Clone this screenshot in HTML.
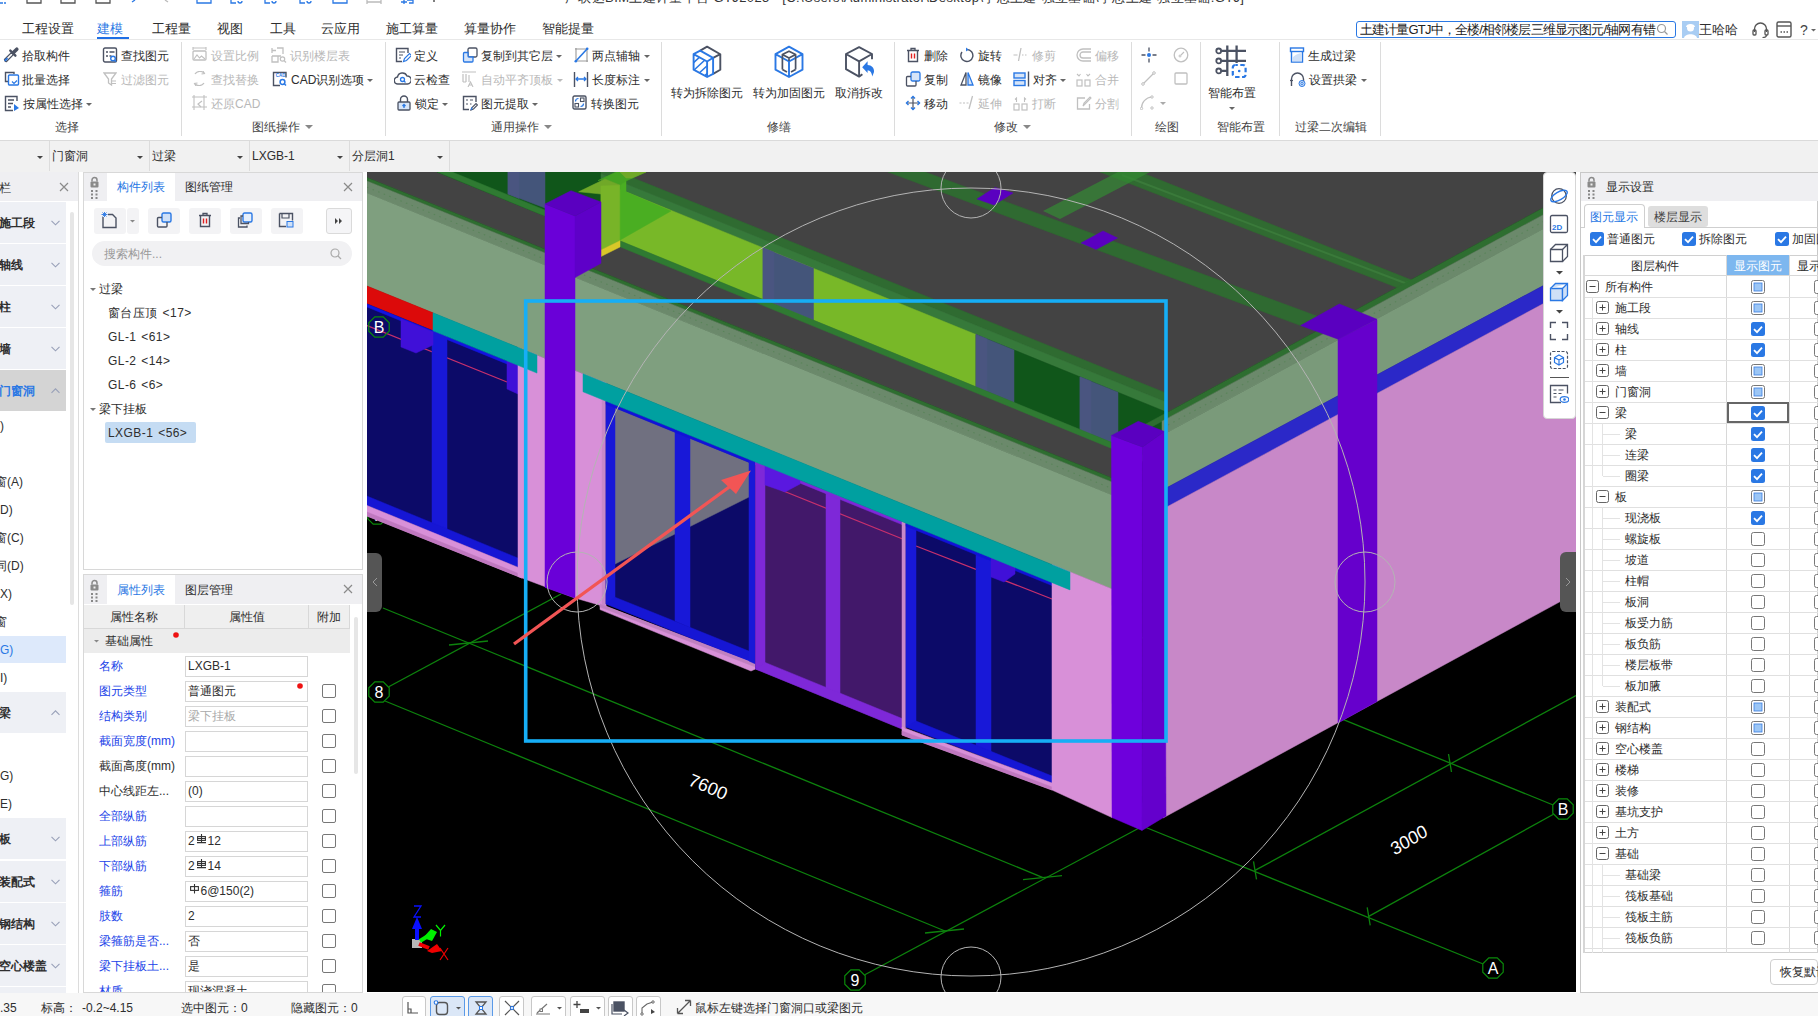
<!DOCTYPE html><html><head><meta charset="utf-8"><style>
html,body{margin:0;padding:0;width:1818px;height:1016px;overflow:hidden;background:#fff;font-family:"Liberation Sans",sans-serif;}
.t{position:absolute;white-space:nowrap;}
.r{position:absolute;}
</style></head><body>
<svg class="r" style="left:0;top:0" width="1818" height="10" viewBox="0 0 1818 10"><path d="M0 3h3M4 3h2" stroke="#2a78e4" stroke-width="1.5"/><path d="M27 0v3h14v-3" stroke="#555" fill="none" stroke-width="1.3"/><path d="M61 0v3h14v-3" stroke="#555" fill="none" stroke-width="1.3"/><path d="M96 0v3h14v-3" stroke="#555" fill="none" stroke-width="1.3"/><path d="M132 2l3 -2" stroke="#2a78e4" stroke-width="1.3"/><path d="M165 0l3 2" stroke="#bbb" stroke-width="1.3"/><path d="M197 0v3h14v-3" stroke="#2a78e4" fill="none" stroke-width="1.3"/><path d="M231 0v3h5M238 1a2 2 0 1 0 4 0" stroke="#2a78e4" fill="none" stroke-width="1.3"/><path d="M265 0v3h5M272 1a2 2 0 1 0 4 0" stroke="#2a78e4" fill="none" stroke-width="1.3"/><path d="M300 0v3h5M307 1a2 2 0 1 0 4 0" stroke="#2a78e4" fill="none" stroke-width="1.3"/><path d="M333 0v3h14v-3" stroke="#2a78e4" fill="none" stroke-width="1.3"/><path d="M367 0v4M381 0v4M367 2h14" stroke="#bbb" fill="none" stroke-width="1.3"/><path d="M401 2h6M404 0v4M407 0h6v3h-4" stroke="#2a78e4" fill="none" stroke-width="1.3"/><path d="M433 1h2" stroke="#555" stroke-width="1.3"/></svg>
<div class="t" style="left:565px;top:-10px;font-size:13px;line-height:16px;color:#333;white-space:nowrap;letter-spacing:0.37px">广联达BIM土建计量平台 GTJ2025 - [C:\Users\Administrator\Desktop\学思土建-独立基础\学思土建-独立基础.GTJ]</div>
<div class="t" style="left:22px;top:19.5px;font-size:13px;line-height:17px;color:#2e2e2e;font-weight:normal;">工程设置</div>
<div class="t" style="left:97px;top:19.5px;font-size:13px;line-height:17px;color:#2a78e4;font-weight:normal;">建模</div>
<div class="t" style="left:152px;top:19.5px;font-size:13px;line-height:17px;color:#2e2e2e;font-weight:normal;">工程量</div>
<div class="t" style="left:217px;top:19.5px;font-size:13px;line-height:17px;color:#2e2e2e;font-weight:normal;">视图</div>
<div class="t" style="left:270px;top:19.5px;font-size:13px;line-height:17px;color:#2e2e2e;font-weight:normal;">工具</div>
<div class="t" style="left:321px;top:19.5px;font-size:13px;line-height:17px;color:#2e2e2e;font-weight:normal;">云应用</div>
<div class="t" style="left:386px;top:19.5px;font-size:13px;line-height:17px;color:#2e2e2e;font-weight:normal;">施工算量</div>
<div class="t" style="left:464px;top:19.5px;font-size:13px;line-height:17px;color:#2e2e2e;font-weight:normal;">算量协作</div>
<div class="t" style="left:542px;top:19.5px;font-size:13px;line-height:17px;color:#2e2e2e;font-weight:normal;">智能提量</div>
<div class="r" style="left:97px;top:37px;width:32px;height:3px;background:#1f6fe5;border-radius:0px;"></div>
<div class="r" style="left:0px;top:39px;width:1818px;height:1px;background:#e8e8e8;border-radius:0px;"></div>
<div class="r" style="left:1356px;top:21px;width:320px;height:17px;background:#fff;border:1.5px solid #2a78e4;box-sizing:border-box;border-radius:3px;"></div>
<div class="t" style="left:1360px;top:21.0px;font-size:13px;line-height:17px;color:#222;font-weight:normal;white-space:nowrap;width:296px;overflow:hidden;letter-spacing:-0.85px">土建计量GTJ中，全楼/相邻楼层三维显示图元/轴网有错</div>
<svg class="r" style="left:1656px;top:23px;" width="13" height="13" viewBox="0 0 13 13"><circle cx="5.5" cy="5.5" r="4" fill="none" stroke="#999" stroke-width="1.2"/><path d="M8.5 8.5l3 3" stroke="#999" stroke-width="1.2"/></svg>
<svg class="r" style="left:1682px;top:21px;" width="17" height="17" viewBox="0 0 17 17"><rect width="17" height="17" fill="#a9cdf3"/><circle cx="8.5" cy="7" r="3.5" fill="#fff"/><path d="M2 17c1-5 12-5 13 0z" fill="#fff"/><path d="M4 6c0-4 9-4 9 0z" fill="#fff"/></svg>
<div class="t" style="left:1699px;top:21.0px;font-size:13px;line-height:17px;color:#2e2e2e;font-weight:normal;">王哈哈</div>
<svg class="r" style="left:1752px;top:21px;" width="17" height="17" viewBox="0 0 17 17"><path d="M2.5 11V8a6 6 0 0 1 12 0v3" fill="none" stroke="#555" stroke-width="1.4"/><rect x="1" y="9" width="3" height="5" rx="1" fill="none" stroke="#555" stroke-width="1.3"/><rect x="13" y="9" width="3" height="5" rx="1" fill="none" stroke="#555" stroke-width="1.3"/><path d="M14.5 14c0 2-2 2.5-4 2.5" stroke="#555" fill="none" stroke-width="1.2"/></svg>
<svg class="r" style="left:1776px;top:20px;" width="16" height="18" viewBox="0 0 16 18"><rect x="1" y="2" width="14" height="15" rx="1.5" fill="none" stroke="#555" stroke-width="1.4"/><path d="M1 6h14" stroke="#555" stroke-width="1.4"/><path d="M4.5 12h1.5M7.5 12h1.5M10.5 12h1.5" stroke="#555" stroke-width="1.4"/></svg>
<div class="t" style="left:1800px;top:20.5px;font-size:14px;line-height:18px;color:#444;font-weight:normal;">?</div>
<svg class="r" style="left:1810.5px;top:28.75px" width="5.0" height="3.5" viewBox="0 0 5.0 3.5"><path d="M0 0H5.0L2.5 2.5Z" fill="#666"/></svg>
<div class="r" style="left:181px;top:42px;width:1px;height:94px;background:#dcdcdc;border-radius:0px;"></div>
<div class="r" style="left:385px;top:42px;width:1px;height:94px;background:#dcdcdc;border-radius:0px;"></div>
<div class="r" style="left:661px;top:42px;width:1px;height:94px;background:#dcdcdc;border-radius:0px;"></div>
<div class="r" style="left:894px;top:42px;width:1px;height:94px;background:#dcdcdc;border-radius:0px;"></div>
<div class="r" style="left:1131px;top:42px;width:1px;height:94px;background:#dcdcdc;border-radius:0px;"></div>
<div class="r" style="left:1200px;top:42px;width:1px;height:94px;background:#dcdcdc;border-radius:0px;"></div>
<div class="r" style="left:1279px;top:42px;width:1px;height:94px;background:#dcdcdc;border-radius:0px;"></div>
<div class="r" style="left:1380px;top:42px;width:1px;height:94px;background:#dcdcdc;border-radius:0px;"></div>
<svg class="r" style="left:3px;top:46px;" width="17" height="17" viewBox="0 0 17 17"><path d="M2.2 15.3L1.5 13.5L8.6 6.4L10.6 8.4L3.5 15.5Z" fill="#fff" stroke="#4b5263" stroke-width="1.3" stroke-linejoin="round"/><path d="M1.8 14.8L4.5 12.1" stroke="#2a78e4" stroke-width="1.8"/><path d="M7.3 4.6L12.4 9.7" stroke="#4b5263" stroke-width="2.4" stroke-linecap="round"/><path d="M10.2 6.8L13.8 3.2" stroke="#4b5263" stroke-width="3.6" stroke-linecap="round"/></svg>
<div class="t" style="left:22px;top:47.5px;font-size:12px;line-height:16px;color:#2e2e2e;font-weight:normal;">拾取构件</div>
<svg class="r" style="left:4px;top:71px;" width="16" height="16" viewBox="0 0 16 16"><path d="M10 3V1.5H1.5v9H4" fill="none" stroke="#4b5263" stroke-width="1.4"/><rect x="4.5" y="4" width="10" height="10" rx="1" fill="none" stroke="#2a78e4" stroke-width="1.4"/><path d="M8 10.5l2 2 3-3" fill="none" stroke="#2a78e4" stroke-width="1.2"/></svg>
<div class="t" style="left:22px;top:71.5px;font-size:12px;line-height:16px;color:#2e2e2e;font-weight:normal;">批量选择</div>
<svg class="r" style="left:4px;top:95px;" width="16" height="17" viewBox="0 0 16 17"><path d="M13 6V1.5H1.5v14H9" fill="none" stroke="#4b5263" stroke-width="1.4"/><path d="M4 5h6M4 8.5h5M4 12h3" stroke="#4b5263" stroke-width="1.3"/><path d="M10 9v7l5-3z" fill="#2a78e4"/></svg>
<div class="t" style="left:23px;top:95.5px;font-size:12px;line-height:16px;color:#2e2e2e;font-weight:normal;">按属性选择</div>
<svg class="r" style="left:86px;top:103.0px" width="6" height="4" viewBox="0 0 6 4"><path d="M0 0H6L3 3Z" fill="#666"/></svg>
<svg class="r" style="left:102px;top:47px;" width="16" height="16" viewBox="0 0 16 16"><rect x="1.5" y="1" width="13" height="14" rx="1.5" fill="none" stroke="#4b5263" stroke-width="1.4"/><path d="M4 5h2M7.5 5h5M4 9h2M7.5 9h2" stroke="#4b5263" stroke-width="1.3"/><circle cx="11" cy="11.5" r="2.3" fill="#fff" stroke="#2a78e4" stroke-width="1.4"/><path d="M12.6 13.2l1.6 1.6" stroke="#2a78e4" stroke-width="1.4"/></svg>
<div class="t" style="left:121px;top:47.5px;font-size:12px;line-height:16px;color:#2e2e2e;font-weight:normal;">查找图元</div>
<svg class="r" style="left:103px;top:71px;" width="14" height="16" viewBox="0 0 14 16"><path d="M1 2h12l-4.5 6v6l-3-2V8z" fill="none" stroke="#c0c0c0" stroke-width="1.3"/><path d="M9 10h4M9 12.5h4" stroke="#c0c0c0" stroke-width="1.1"/></svg>
<div class="t" style="left:121px;top:71.5px;font-size:12px;line-height:16px;color:#b8b8b8;font-weight:normal;">过滤图元</div>
<div class="t" style="left:-33.0px;top:119.0px;width:200px;text-align:center;font-size:12px;line-height:16px;color:#444;font-weight:normal">选择</div>
<svg class="r" style="left:192px;top:47px;" width="15" height="15" viewBox="0 0 15 15"><path d="M1 1h13M1 0v3M14 0v3" stroke="#c0c0c0" stroke-width="1.1"/><rect x="1" y="4" width="13" height="9" rx="1" fill="none" stroke="#c0c0c0" stroke-width="1.3"/><path d="M2 12l3-4 2.5 3 2-2 3.5 3" fill="none" stroke="#c0c0c0" stroke-width="1.1"/></svg>
<div class="t" style="left:211px;top:47.5px;font-size:12px;line-height:16px;color:#b8b8b8;font-weight:normal;">设置比例</div>
<svg class="r" style="left:271px;top:47px;" width="16" height="17" viewBox="0 0 16 17"><path d="M1 1v5M1 3.5h4M6 1h6v6M1 9v6h6v-6H1M7 9h3" fill="none" stroke="#c0c0c0" stroke-width="1.3"/><circle cx="11.5" cy="12" r="2.2" fill="none" stroke="#c0c0c0" stroke-width="1.2"/><path d="M13 13.5l2 2" stroke="#c0c0c0" stroke-width="1.2"/></svg>
<div class="t" style="left:290px;top:47.5px;font-size:12px;line-height:16px;color:#b8b8b8;font-weight:normal;">识别楼层表</div>
<svg class="r" style="left:192px;top:71px;" width="15" height="15" viewBox="0 0 15 15"><path d="M3 3a6 6 0 0 1 9-1M12 12a6 6 0 0 1-9 1" fill="none" stroke="#c0c0c0" stroke-width="1.3"/><path d="M11 0l1.5 2.5-3 .5M4 15l-1.5-2.5 3-.5" fill="none" stroke="#c0c0c0" stroke-width="1.1"/></svg>
<div class="t" style="left:211px;top:71.5px;font-size:12px;line-height:16px;color:#b8b8b8;font-weight:normal;">查找替换</div>
<svg class="r" style="left:272px;top:71px;" width="16" height="16" viewBox="0 0 16 16"><path d="M5 1.5H1.5v13H8" fill="none" stroke="#4b5263" stroke-width="1.4"/><path d="M5 1.5h9v5" fill="none" stroke="#4b5263" stroke-width="1.4"/><text x="3.8" y="6.3" font-size="4.5" fill="#2a78e4" font-family="Liberation Sans" font-weight="bold">CAD</text><circle cx="10.5" cy="11" r="2.4" fill="none" stroke="#2a78e4" stroke-width="1.5"/><path d="M12 12.5l2 2" stroke="#2a78e4" stroke-width="1.5"/></svg>
<div class="t" style="left:291px;top:71.5px;font-size:12px;line-height:16px;color:#2e2e2e;font-weight:normal;">CAD识别选项</div>
<svg class="r" style="left:367px;top:79.0px" width="6" height="4" viewBox="0 0 6 4"><path d="M0 0H6L3 3Z" fill="#666"/></svg>
<svg class="r" style="left:192px;top:95px;" width="15" height="15" viewBox="0 0 15 15"><path d="M2 0v15M0 2h15M0 12h15M12 0v15" stroke="#c0c0c0" stroke-width="1.1"/><path d="M10 6l-4 3 3 3" fill="none" stroke="#c0c0c0" stroke-width="1.2"/></svg>
<div class="t" style="left:211px;top:95.5px;font-size:12px;line-height:16px;color:#b8b8b8;font-weight:normal;">还原CAD</div>
<div class="t" style="left:252px;top:119.0px;font-size:12px;line-height:16px;color:#444;font-weight:normal;">图纸操作</div>
<svg class="r" style="left:305px;top:125.0px" width="8" height="5" viewBox="0 0 8 5"><path d="M0 0H8L4 4Z" fill="#888"/></svg>
<svg class="r" style="left:395px;top:47px;" width="16" height="16" viewBox="0 0 16 16"><path d="M13 6V1.5H1.5v13H7" fill="none" stroke="#4b5263" stroke-width="1.4"/><path d="M4 5h6M4 8h4M4 11h2" stroke="#4b5263" stroke-width="1.2"/><path d="M8.5 14.5l1-3 5-5 2 2-5 5z" fill="none" stroke="#2a78e4" stroke-width="1.2"/></svg>
<div class="t" style="left:414px;top:47.5px;font-size:12px;line-height:16px;color:#2e2e2e;font-weight:normal;">定义</div>
<svg class="r" style="left:394px;top:71px;" width="17" height="15" viewBox="0 0 17 15"><path d="M4 13a3.5 3.5 0 0 1-.5-7A5 5 0 0 1 13 5a3.8 3.8 0 0 1 .5 8z" fill="none" stroke="#4b5263" stroke-width="1.4"/><circle cx="8.5" cy="8.5" r="2" fill="none" stroke="#2a78e4" stroke-width="1.3"/><path d="M10 10l1.5 1.5" stroke="#2a78e4" stroke-width="1.3"/></svg>
<div class="t" style="left:414px;top:71.5px;font-size:12px;line-height:16px;color:#2e2e2e;font-weight:normal;">云检查</div>
<svg class="r" style="left:397px;top:95px;" width="14" height="16" viewBox="0 0 14 16"><path d="M3.5 7V4.5a3.5 3.5 0 0 1 7 0V7" fill="none" stroke="#4b5263" stroke-width="1.4"/><rect x="1" y="7" width="12" height="8" rx="1" fill="#d6e4f8" stroke="#4b5263" stroke-width="1.3"/><path d="M7 9.5v3.5M5.5 11l1.5-1.5 1.5 1.5" fill="none" stroke="#2a78e4" stroke-width="1.3"/></svg>
<div class="t" style="left:415px;top:95.5px;font-size:12px;line-height:16px;color:#2e2e2e;font-weight:normal;">锁定</div>
<svg class="r" style="left:442px;top:103.0px" width="6" height="4" viewBox="0 0 6 4"><path d="M0 0H6L3 3Z" fill="#666"/></svg>
<svg class="r" style="left:462px;top:47px;" width="16" height="16" viewBox="0 0 16 16"><rect x="6" y="1" width="9" height="9" rx="1.5" fill="#fff" stroke="#4b5263" stroke-width="1.3"/><path d="M6 5.5H2.5a1 1 0 0 0-1 1V14a1 1 0 0 0 1 1H10a1 1 0 0 0 1-1V10H7a1 1 0 0 1-1-1z" fill="#d6e4f8" stroke="#2a78e4" stroke-width="1.3"/></svg>
<div class="t" style="left:481px;top:47.5px;font-size:12px;line-height:16px;color:#2e2e2e;font-weight:normal;">复制到其它层</div>
<svg class="r" style="left:556px;top:55.0px" width="6" height="4" viewBox="0 0 6 4"><path d="M0 0H6L3 3Z" fill="#666"/></svg>
<svg class="r" style="left:461px;top:71px;" width="15" height="16" viewBox="0 0 15 16"><path d="M1 1h14M2 3v8M5 3v8M2 11h3" fill="none" stroke="#c0c0c0" stroke-width="1.2"/><path d="M8 4v7M7 16l2.5-5 2.5 5M8 14h3" fill="none" stroke="#c0c0c0" stroke-width="1.1"/></svg>
<div class="t" style="left:481px;top:71.5px;font-size:12px;line-height:16px;color:#b8b8b8;font-weight:normal;">自动平齐顶板</div>
<svg class="r" style="left:557px;top:79.0px" width="6" height="4" viewBox="0 0 6 4"><path d="M0 0H6L3 3Z" fill="#bbb"/></svg>
<svg class="r" style="left:462px;top:95px;" width="16" height="16" viewBox="0 0 16 16"><path d="M14 7V1.5H1.5v13H7" fill="none" stroke="#4b5263" stroke-width="1.4"/><path d="M4 5h2M8 5h3M4 9h2M8 9h1.5" stroke="#4b5263" stroke-width="1.2"/><path d="M9 15l1-2.5 4-4 1.5 1.5-4 4z" fill="none" stroke="#4b5263" stroke-width="1.1"/><path d="M9 15l1-2.5" stroke="#2a78e4" stroke-width="1.3"/></svg>
<div class="t" style="left:481px;top:95.5px;font-size:12px;line-height:16px;color:#2e2e2e;font-weight:normal;">图元提取</div>
<svg class="r" style="left:532px;top:103.0px" width="6" height="4" viewBox="0 0 6 4"><path d="M0 0H6L3 3Z" fill="#666"/></svg>
<svg class="r" style="left:574px;top:47px;" width="15" height="16" viewBox="0 0 15 16"><path d="M1 2h12M2 14h12M2 1v14M13 1v14" fill="none" stroke="#999" stroke-width="1.1"/><path d="M1.5 14.5L13.5 1.5" stroke="#2a78e4" stroke-width="1.6"/><circle cx="1.8" cy="14.2" r="1.3" fill="#2a78e4"/><circle cx="13.2" cy="1.8" r="1.3" fill="#2a78e4"/></svg>
<div class="t" style="left:592px;top:47.5px;font-size:12px;line-height:16px;color:#2e2e2e;font-weight:normal;">两点辅轴</div>
<svg class="r" style="left:644px;top:55.0px" width="6" height="4" viewBox="0 0 6 4"><path d="M0 0H6L3 3Z" fill="#666"/></svg>
<svg class="r" style="left:573px;top:71px;" width="16" height="16" viewBox="0 0 16 16"><path d="M1.5 1v15M14.5 1v15" stroke="#4b5263" stroke-width="1.4"/><path d="M3 8h10M5 6l-2 2 2 2M11 6l2 2-2 2" fill="none" stroke="#2a78e4" stroke-width="1.3"/></svg>
<div class="t" style="left:592px;top:71.5px;font-size:12px;line-height:16px;color:#2e2e2e;font-weight:normal;">长度标注</div>
<svg class="r" style="left:644px;top:79.0px" width="6" height="4" viewBox="0 0 6 4"><path d="M0 0H6L3 3Z" fill="#666"/></svg>
<svg class="r" style="left:572px;top:95px;" width="15" height="15" viewBox="0 0 15 15"><rect x="1" y="1" width="13" height="13" rx="1.5" fill="none" stroke="#4b5263" stroke-width="1.4"/><rect x="8.5" y="3" width="3.5" height="3.5" fill="none" stroke="#4b5263" stroke-width="1.1"/><rect x="3" y="8.5" width="3.5" height="3.5" fill="none" stroke="#4b5263" stroke-width="1.1"/><path d="M3.5 6.5a3 3 0 0 1 3-3M11.5 8.5a3 3 0 0 1-3 3" fill="none" stroke="#2a78e4" stroke-width="1.2"/></svg>
<div class="t" style="left:591px;top:95.5px;font-size:12px;line-height:16px;color:#2e2e2e;font-weight:normal;">转换图元</div>
<div class="t" style="left:491px;top:119.0px;font-size:12px;line-height:16px;color:#444;font-weight:normal;">通用操作</div>
<svg class="r" style="left:544px;top:125.0px" width="8" height="5" viewBox="0 0 8 5"><path d="M0 0H8L4 4Z" fill="#888"/></svg>
<svg class="r" style="left:692px;top:45px;" width="30" height="33" viewBox="0 0 30 33"><defs><clipPath id="lf"><path d="M1.6 9.2L15.1 16.5V32L1.6 24.7z"/></clipPath></defs><path d="M8.2 5.6L15.1 1.6L28.3 9.2V24.7L21.1 28.9M21.1 12.8L28.3 9.2" fill="none" stroke="#4b5263" stroke-width="1.9" stroke-linejoin="round"/><path d="M1.6 9.2L8.2 5.6L21.1 12.8V28.9L15.1 32L1.6 24.7Z M1.6 9.2L15.1 16.5L21.1 12.8 M15.1 16.5V32" fill="none" stroke="#2a78e4" stroke-width="1.9" stroke-linejoin="round"/><g clip-path="url(#lf)"><path d="M-1 20L10 10M1 26L14 14M5 30L16 20M10 33L17 27" stroke="#2a78e4" stroke-width="1.6"/></g></svg>
<div class="t" style="left:607.0px;top:85.0px;width:200px;text-align:center;font-size:12px;line-height:16px;color:#2e2e2e;font-weight:normal">转为拆除图元</div>
<svg class="r" style="left:774px;top:45px;" width="30" height="33" viewBox="0 0 30 33"><path d="M15 1.6L28.5 9.2V24.7L15 32L1.5 24.7V9.2Z M1.5 9.2L15 16.5L28.5 9.2 M15 16.5V32" fill="none" stroke="#2a78e4" stroke-width="1.9" stroke-linejoin="round"/><path d="M8.4 24.4V9.5L15 6.2L21.6 9.5V24.4 M8.4 9.5L15 13L21.6 9.5 M15 13V16" fill="none" stroke="#4b5263" stroke-width="1.7" stroke-linejoin="round"/><path d="M8.4 24.4L13 27M21.6 24.4L17 27" stroke="#4b5263" stroke-width="1.7"/></svg>
<div class="t" style="left:689.0px;top:85.0px;width:200px;text-align:center;font-size:12px;line-height:16px;color:#2e2e2e;font-weight:normal">转为加固图元</div>
<svg class="r" style="left:845px;top:46px;" width="31" height="33" viewBox="0 0 31 33"><path d="M1 8L14.1 1.1L27 8L14.1 15.3Z M1 8V23.2L14.1 30.6L17.4 28.3 M14.1 15.3V30.6 M27 8V13.3" fill="none" stroke="#4b5263" stroke-width="1.9" stroke-linejoin="round"/><path d="M17.2 21.2L22.6 15.3V19C26.5 19 29.5 22 29 26L27.3 30.6C27 27 25 24.2 22.6 24.2V26.9Z" fill="#2a78e4"/></svg>
<div class="t" style="left:759.0px;top:85.0px;width:200px;text-align:center;font-size:12px;line-height:16px;color:#2e2e2e;font-weight:normal">取消拆改</div>
<div class="t" style="left:679.0px;top:119.0px;width:200px;text-align:center;font-size:12px;line-height:16px;color:#444;font-weight:normal">修缮</div>
<svg class="r" style="left:906px;top:47px;" width="14" height="16" viewBox="0 0 14 16"><path d="M1 3.5h12M5 3.5V1.5h4v2" fill="none" stroke="#4b5263" stroke-width="1.3"/><path d="M2.5 3.5v11h9v-11" fill="none" stroke="#4b5263" stroke-width="1.4"/><path d="M5.5 6.5v5M8.5 6.5v5" stroke="#e02020" stroke-width="1.4"/></svg>
<div class="t" style="left:924px;top:47.5px;font-size:12px;line-height:16px;color:#2e2e2e;font-weight:normal;">删除</div>
<svg class="r" style="left:905px;top:71px;" width="16" height="16" viewBox="0 0 16 16"><rect x="6" y="1" width="9" height="9" rx="1.5" fill="#d6e4f8" stroke="#2a78e4" stroke-width="1.3"/><path d="M6 5.5H2.5a1 1 0 0 0-1 1V14a1 1 0 0 0 1 1H10a1 1 0 0 0 1-1V10" fill="none" stroke="#4b5263" stroke-width="1.3"/></svg>
<div class="t" style="left:924px;top:71.5px;font-size:12px;line-height:16px;color:#2e2e2e;font-weight:normal;">复制</div>
<svg class="r" style="left:905px;top:95px;" width="16" height="16" viewBox="0 0 16 16"><path d="M8 1.5v13M1.5 8h13" stroke="#4b5263" stroke-width="1.2"/><path d="M6 3.5L8 1.5l2 2M6 12.5l2 2 2-2M3.5 6L1.5 8l2 2M12.5 6l2 2-2 2" fill="none" stroke="#2a78e4" stroke-width="1.4"/></svg>
<div class="t" style="left:924px;top:95.5px;font-size:12px;line-height:16px;color:#2e2e2e;font-weight:normal;">移动</div>
<svg class="r" style="left:959px;top:47px;" width="15" height="16" viewBox="0 0 15 16"><path d="M8 2.5A6 6 0 1 1 3 5" fill="none" stroke="#4b5263" stroke-width="1.4"/><path d="M7 0.5l2.5 2-2.5 2z" fill="#2a78e4"/></svg>
<div class="t" style="left:978px;top:47.5px;font-size:12px;line-height:16px;color:#2e2e2e;font-weight:normal;">旋转</div>
<svg class="r" style="left:960px;top:71px;" width="14" height="15" viewBox="0 0 14 15"><path d="M6 1.5L1 14h5z" fill="none" stroke="#4b5263" stroke-width="1.3"/><path d="M8 1.5L13 14H8z" fill="#d6e4f8" stroke="#2a78e4" stroke-width="1.3"/></svg>
<div class="t" style="left:978px;top:71.5px;font-size:12px;line-height:16px;color:#2e2e2e;font-weight:normal;">镜像</div>
<svg class="r" style="left:959px;top:95px;" width="15" height="15" viewBox="0 0 15 15"><path d="M0.5 8h2M4 8h2M7.5 8h2" stroke="#c0c0c0" stroke-width="1.2"/><path d="M13.5 1L10 14" stroke="#c0c0c0" stroke-width="1.3"/></svg>
<div class="t" style="left:978px;top:95.5px;font-size:12px;line-height:16px;color:#b8b8b8;font-weight:normal;">延伸</div>
<svg class="r" style="left:1013px;top:47px;" width="15" height="15" viewBox="0 0 15 15"><path d="M0.5 8h4M9 8h1.5M12 8h1.5" stroke="#c0c0c0" stroke-width="1.2"/><path d="M8 1L5.5 14" stroke="#c0c0c0" stroke-width="1.3"/></svg>
<div class="t" style="left:1032px;top:47.5px;font-size:12px;line-height:16px;color:#b8b8b8;font-weight:normal;">修剪</div>
<svg class="r" style="left:1013px;top:71px;" width="17" height="16" viewBox="0 0 17 16"><rect x="1" y="2" width="11" height="5" fill="#d6e4f8" stroke="#2a78e4" stroke-width="1.4"/><rect x="1" y="9.5" width="11" height="5" fill="#d6e4f8" stroke="#2a78e4" stroke-width="1.4"/><path d="M15.5 0.5v15" stroke="#4b5263" stroke-width="1.4"/></svg>
<div class="t" style="left:1033px;top:71.5px;font-size:12px;line-height:16px;color:#2e2e2e;font-weight:normal;">对齐</div>
<svg class="r" style="left:1060px;top:79.0px" width="6" height="4" viewBox="0 0 6 4"><path d="M0 0H6L3 3Z" fill="#666"/></svg>
<svg class="r" style="left:1013px;top:95px;" width="15" height="16" viewBox="0 0 15 16"><rect x="1" y="9" width="5" height="6" fill="none" stroke="#c0c0c0" stroke-width="1.2"/><rect x="9" y="9" width="5" height="6" fill="none" stroke="#c0c0c0" stroke-width="1.2"/><path d="M3.5 7V3l-1.5 1.5M11.5 7V3l1.5 1.5" fill="none" stroke="#c0c0c0" stroke-width="1.1"/></svg>
<div class="t" style="left:1032px;top:95.5px;font-size:12px;line-height:16px;color:#b8b8b8;font-weight:normal;">打断</div>
<svg class="r" style="left:1076px;top:47px;" width="15" height="15" viewBox="0 0 15 15"><path d="M15 2H7a6 6 0 0 0 0 12h8M15 5H7a3 3 0 0 0 0 6h8" fill="none" stroke="#c0c0c0" stroke-width="1.3"/></svg>
<div class="t" style="left:1095px;top:47.5px;font-size:12px;line-height:16px;color:#b8b8b8;font-weight:normal;">偏移</div>
<svg class="r" style="left:1076px;top:71px;" width="15" height="16" viewBox="0 0 15 16"><rect x="1" y="9" width="5" height="6" fill="none" stroke="#c0c0c0" stroke-width="1.2"/><rect x="9" y="9" width="5" height="6" fill="none" stroke="#c0c0c0" stroke-width="1.2"/><path d="M1 3l2 2 1.5-2M14 3l-2 2-1.5-2" fill="none" stroke="#c0c0c0" stroke-width="1.1"/></svg>
<div class="t" style="left:1095px;top:71.5px;font-size:12px;line-height:16px;color:#b8b8b8;font-weight:normal;">合并</div>
<svg class="r" style="left:1076px;top:95px;" width="16" height="15" viewBox="0 0 16 15"><path d="M9 3H1.5v11h12V9" fill="none" stroke="#c0c0c0" stroke-width="1.3"/><path d="M7 11l1-3 6-6 1 1-6 6z" fill="none" stroke="#c0c0c0" stroke-width="1.1"/></svg>
<div class="t" style="left:1095px;top:95.5px;font-size:12px;line-height:16px;color:#b8b8b8;font-weight:normal;">分割</div>
<div class="t" style="left:994px;top:119.0px;font-size:12px;line-height:16px;color:#444;font-weight:normal;">修改</div>
<svg class="r" style="left:1023px;top:125.0px" width="8" height="5" viewBox="0 0 8 5"><path d="M0 0H8L4 4Z" fill="#888"/></svg>
<svg class="r" style="left:1141px;top:47px;" width="16" height="16" viewBox="0 0 16 16"><path d="M8 0.5v4M8 11.5v4M0.5 8h4M11.5 8h4" stroke="#4b5263" stroke-width="1.3"/><circle cx="8" cy="8" r="2" fill="#2a78e4"/></svg>
<svg class="r" style="left:1173px;top:47px;" width="16" height="16" viewBox="0 0 16 16"><circle cx="8" cy="8" r="6.8" fill="none" stroke="#c0c0c0" stroke-width="1.3"/><circle cx="7" cy="9" r="1" fill="none" stroke="#c0c0c0"/><path d="M8 8l3-3" stroke="#c0c0c0" stroke-width="1.1"/></svg>
<svg class="r" style="left:1141px;top:71px;" width="15" height="15" viewBox="0 0 15 15"><path d="M2 13L13 2" stroke="#c0c0c0" stroke-width="1.2"/><circle cx="2" cy="13" r="1.3" fill="#fff" stroke="#c0c0c0"/><circle cx="13" cy="2" r="1.3" fill="#fff" stroke="#c0c0c0"/></svg>
<svg class="r" style="left:1174px;top:72px;" width="14" height="13" viewBox="0 0 14 13"><rect x="1" y="1" width="12" height="11" rx="1" fill="none" stroke="#c0c0c0" stroke-width="1.3"/></svg>
<svg class="r" style="left:1140px;top:95px;" width="14" height="15" viewBox="0 0 14 15"><path d="M1.5 13.5A11 11 0 0 1 12 2" fill="none" stroke="#c0c0c0" stroke-width="1.2"/><circle cx="1.5" cy="13.5" r="1.2" fill="#fff" stroke="#c0c0c0"/><circle cx="12" cy="2" r="1.2" fill="#fff" stroke="#c0c0c0"/><circle cx="12" cy="13" r="1.2" fill="#fff" stroke="#c0c0c0"/></svg>
<svg class="r" style="left:1160px;top:102.0px" width="6" height="4" viewBox="0 0 6 4"><path d="M0 0H6L3 3Z" fill="#aaa"/></svg>
<div class="t" style="left:1067.0px;top:119.0px;width:200px;text-align:center;font-size:12px;line-height:16px;color:#444;font-weight:normal">绘图</div>
<svg class="r" style="left:1215px;top:45px;" width="33" height="34" viewBox="0 0 33 34"><path d="M6 5.9H31M6 15.9H31M6 25.9H13M12.3 0.5V31M21.6 0.5V18" stroke="#4b5263" stroke-width="2.3" fill="none"/><circle cx="3.7" cy="5.9" r="2.4" fill="#fff" stroke="#4b5263" stroke-width="1.8"/><circle cx="3.7" cy="15.9" r="2.4" fill="#fff" stroke="#4b5263" stroke-width="1.8"/><circle cx="3.7" cy="25.9" r="2.4" fill="#fff" stroke="#4b5263" stroke-width="1.8"/><rect x="17.8" y="20" width="12.8" height="12" rx="2.5" fill="#fff" stroke="#2a78e4" stroke-width="2.2" stroke-dasharray="4.5 2.5" stroke-dashoffset="2"/><circle cx="24.2" cy="26" r="1.3" fill="#2a78e4"/></svg>
<div class="t" style="left:1132.0px;top:85.0px;width:200px;text-align:center;font-size:12px;line-height:16px;color:#2e2e2e;font-weight:normal">智能布置</div>
<svg class="r" style="left:1229px;top:106.5px" width="6" height="4" viewBox="0 0 6 4"><path d="M0 0H6L3 3Z" fill="#666"/></svg>
<div class="t" style="left:1141.0px;top:119.0px;width:200px;text-align:center;font-size:12px;line-height:16px;color:#444;font-weight:normal">智能布置</div>
<svg class="r" style="left:1289px;top:47px;" width="16" height="16" viewBox="0 0 16 16"><rect x="1.5" y="1" width="13" height="3.5" fill="none" stroke="#2a78e4" stroke-width="1.4"/><path d="M2.5 4.5V15h11V4.5" fill="none" stroke="#2a78e4" stroke-width="1.4"/><path d="M3 14.5V11c3-3 6-4.5 10-5v8.5z" fill="#cfe0f7"/></svg>
<div class="t" style="left:1308px;top:47.5px;font-size:12px;line-height:16px;color:#2e2e2e;font-weight:normal;">生成过梁</div>
<svg class="r" style="left:1290px;top:71px;" width="16" height="16" viewBox="0 0 16 16"><path d="M1.5 15V8a6 6 0 0 1 12 0v2" fill="none" stroke="#4b5263" stroke-width="1.4"/><path d="M0 9.5h3" stroke="#4b5263" stroke-width="1.2"/><circle cx="12" cy="12.5" r="3" fill="#cfe0f7" stroke="#2a78e4" stroke-width="1"/><circle cx="12" cy="12.5" r="1.2" fill="none" stroke="#2a78e4" stroke-width=".8"/></svg>
<div class="t" style="left:1309px;top:71.5px;font-size:12px;line-height:16px;color:#2e2e2e;font-weight:normal;">设置拱梁</div>
<svg class="r" style="left:1361px;top:79.0px" width="6" height="4" viewBox="0 0 6 4"><path d="M0 0H6L3 3Z" fill="#666"/></svg>
<div class="t" style="left:1231.0px;top:119.0px;width:200px;text-align:center;font-size:12px;line-height:16px;color:#444;font-weight:normal">过梁二次编辑</div>
<div class="r" style="left:0px;top:140px;width:1818px;height:32px;background:#f1f1f1;border-radius:0px;"></div>
<div class="r" style="left:0px;top:140px;width:1818px;height:1px;background:#dadada;border-radius:0px;"></div>
<div class="r" style="left:49px;top:141px;width:1px;height:30px;background:#dcdcdc;border-radius:0px;"></div>
<div class="r" style="left:149px;top:141px;width:1px;height:30px;background:#dcdcdc;border-radius:0px;"></div>
<div class="r" style="left:249px;top:141px;width:1px;height:30px;background:#dcdcdc;border-radius:0px;"></div>
<div class="r" style="left:349px;top:141px;width:1px;height:30px;background:#dcdcdc;border-radius:0px;"></div>
<div class="r" style="left:449px;top:141px;width:1px;height:30px;background:#dcdcdc;border-radius:0px;"></div>
<svg class="r" style="left:37px;top:155.5px" width="6" height="4" viewBox="0 0 6 4"><path d="M0 0H6L3 3Z" fill="#444"/></svg>
<svg class="r" style="left:137px;top:155.5px" width="6" height="4" viewBox="0 0 6 4"><path d="M0 0H6L3 3Z" fill="#444"/></svg>
<svg class="r" style="left:237px;top:155.5px" width="6" height="4" viewBox="0 0 6 4"><path d="M0 0H6L3 3Z" fill="#444"/></svg>
<svg class="r" style="left:337px;top:155.5px" width="6" height="4" viewBox="0 0 6 4"><path d="M0 0H6L3 3Z" fill="#444"/></svg>
<svg class="r" style="left:437px;top:155.5px" width="6" height="4" viewBox="0 0 6 4"><path d="M0 0H6L3 3Z" fill="#444"/></svg>
<div class="t" style="left:52px;top:148.0px;font-size:12px;line-height:16px;color:#2e2e2e;font-weight:normal;">门窗洞</div>
<div class="t" style="left:152px;top:148.0px;font-size:12px;line-height:16px;color:#2e2e2e;font-weight:normal;">过梁</div>
<div class="t" style="left:252px;top:148.0px;font-size:12px;line-height:16px;color:#2e2e2e;font-weight:normal;">LXGB-1</div>
<div class="t" style="left:352px;top:148.0px;font-size:12px;line-height:16px;color:#2e2e2e;font-weight:normal;">分层洞1</div>
<div class="r" style="left:0px;top:172px;width:79px;height:821px;background:#fff;border-radius:0px;"></div>
<div class="r" style="left:78px;top:172px;width:1px;height:821px;background:#dcdcdc;border-radius:0px;"></div>
<div class="r" style="left:0px;top:172px;width:78px;height:29px;background:#efeff2;border-radius:0px;"></div>
<div class="t" style="left:-1px;top:179.5px;font-size:12px;line-height:16px;color:#2e2e2e;font-weight:normal;">栏</div>
<svg class="r" style="left:59px;top:182px;" width="10" height="10" viewBox="0 0 10 10"><path d="M1 1l8 8M9 1L1 9" stroke="#8a8a8a" stroke-width="1.2"/></svg>
<div class="r" style="left:0px;top:202px;width:66px;height:41px;background:#eef0f5;border-radius:0px;"></div>
<div class="t" style="left:-1px;top:215.0px;font-size:12px;line-height:16px;color:#2e2e2e;font-weight:bold;">施工段</div>
<svg class="r" style="left:51px;top:220px;" width="9" height="6" viewBox="0 0 9 6"><path d="M0 0l4 4 4-4" fill="none" stroke="#98a0b8" stroke-width="1.1" transform="translate(0.5,0.8)"/></svg>
<div class="r" style="left:0px;top:244px;width:66px;height:41px;background:#eef0f5;border-radius:0px;"></div>
<div class="t" style="left:-1px;top:257.0px;font-size:12px;line-height:16px;color:#2e2e2e;font-weight:bold;">轴线</div>
<svg class="r" style="left:51px;top:262px;" width="9" height="6" viewBox="0 0 9 6"><path d="M0 0l4 4 4-4" fill="none" stroke="#98a0b8" stroke-width="1.1" transform="translate(0.5,0.8)"/></svg>
<div class="r" style="left:0px;top:286px;width:66px;height:41px;background:#eef0f5;border-radius:0px;"></div>
<div class="t" style="left:-1px;top:299.0px;font-size:12px;line-height:16px;color:#2e2e2e;font-weight:bold;">柱</div>
<svg class="r" style="left:51px;top:304px;" width="9" height="6" viewBox="0 0 9 6"><path d="M0 0l4 4 4-4" fill="none" stroke="#98a0b8" stroke-width="1.1" transform="translate(0.5,0.8)"/></svg>
<div class="r" style="left:0px;top:328px;width:66px;height:41px;background:#eef0f5;border-radius:0px;"></div>
<div class="t" style="left:-1px;top:341.0px;font-size:12px;line-height:16px;color:#2e2e2e;font-weight:bold;">墙</div>
<svg class="r" style="left:51px;top:346px;" width="9" height="6" viewBox="0 0 9 6"><path d="M0 0l4 4 4-4" fill="none" stroke="#98a0b8" stroke-width="1.1" transform="translate(0.5,0.8)"/></svg>
<div class="r" style="left:0px;top:370px;width:66px;height:41px;background:#d4d4d4;border-radius:0px;"></div>
<div class="t" style="left:-1px;top:383.0px;font-size:12px;line-height:16px;color:#2a78e4;font-weight:bold;">门窗洞</div>
<svg class="r" style="left:51px;top:388px;" width="9" height="6" viewBox="0 0 9 6"><path d="M0 4l4-4 4 4" fill="none" stroke="#98a0b8" stroke-width="1.1" transform="translate(0.5,0.8)"/></svg>
<div class="r" style="left:0px;top:636px;width:66px;height:27px;background:#dde9fb;border-radius:0px;"></div>
<div class="t" style="left:0px;top:418.0px;font-size:12px;line-height:16px;color:#2e2e2e;font-weight:normal;">)</div>
<div class="t" style="left:-5px;top:474.0px;font-size:12px;line-height:16px;color:#2e2e2e;font-weight:normal;">窗(A)</div>
<div class="t" style="left:0px;top:502.0px;font-size:12px;line-height:16px;color:#2e2e2e;font-weight:normal;">D)</div>
<div class="t" style="left:-5px;top:530.0px;font-size:12px;line-height:16px;color:#2e2e2e;font-weight:normal;">窗(C)</div>
<div class="t" style="left:-5px;top:558.0px;font-size:12px;line-height:16px;color:#2e2e2e;font-weight:normal;">同(D)</div>
<div class="t" style="left:0px;top:586.0px;font-size:12px;line-height:16px;color:#2e2e2e;font-weight:normal;">X)</div>
<div class="t" style="left:-5px;top:614.0px;font-size:12px;line-height:16px;color:#2e2e2e;font-weight:normal;">窗</div>
<div class="t" style="left:0px;top:642.0px;font-size:12px;line-height:16px;color:#2a78e4;font-weight:normal;">G)</div>
<div class="t" style="left:0px;top:670.0px;font-size:12px;line-height:16px;color:#2e2e2e;font-weight:normal;">I)</div>
<div class="r" style="left:0px;top:692px;width:66px;height:41px;background:#eef0f5;border-radius:0px;"></div>
<div class="t" style="left:-1px;top:705.0px;font-size:12px;line-height:16px;color:#2e2e2e;font-weight:bold;">梁</div>
<svg class="r" style="left:51px;top:710px;" width="9" height="6" viewBox="0 0 9 6"><path d="M0 4l4-4 4 4" fill="none" stroke="#98a0b8" stroke-width="1.1" transform="translate(0.5,0.8)"/></svg>
<div class="t" style="left:0px;top:768.0px;font-size:12px;line-height:16px;color:#2e2e2e;font-weight:normal;">G)</div>
<div class="t" style="left:0px;top:796.0px;font-size:12px;line-height:16px;color:#2e2e2e;font-weight:normal;">E)</div>
<div class="r" style="left:0px;top:818px;width:66px;height:41px;background:#eef0f5;border-radius:0px;"></div>
<div class="t" style="left:-1px;top:831.0px;font-size:12px;line-height:16px;color:#2e2e2e;font-weight:bold;">板</div>
<svg class="r" style="left:51px;top:836px;" width="9" height="6" viewBox="0 0 9 6"><path d="M0 0l4 4 4-4" fill="none" stroke="#98a0b8" stroke-width="1.1" transform="translate(0.5,0.8)"/></svg>
<div class="r" style="left:0px;top:861px;width:66px;height:41px;background:#eef0f5;border-radius:0px;"></div>
<div class="t" style="left:-1px;top:874.0px;font-size:12px;line-height:16px;color:#2e2e2e;font-weight:bold;">装配式</div>
<svg class="r" style="left:51px;top:879px;" width="9" height="6" viewBox="0 0 9 6"><path d="M0 0l4 4 4-4" fill="none" stroke="#98a0b8" stroke-width="1.1" transform="translate(0.5,0.8)"/></svg>
<div class="r" style="left:0px;top:903px;width:66px;height:41px;background:#eef0f5;border-radius:0px;"></div>
<div class="t" style="left:-1px;top:916.0px;font-size:12px;line-height:16px;color:#2e2e2e;font-weight:bold;">钢结构</div>
<svg class="r" style="left:51px;top:921px;" width="9" height="6" viewBox="0 0 9 6"><path d="M0 0l4 4 4-4" fill="none" stroke="#98a0b8" stroke-width="1.1" transform="translate(0.5,0.8)"/></svg>
<div class="r" style="left:0px;top:945px;width:66px;height:41px;background:#eef0f5;border-radius:0px;"></div>
<div class="t" style="left:-1px;top:958.0px;font-size:12px;line-height:16px;color:#2e2e2e;font-weight:bold;">空心楼盖</div>
<svg class="r" style="left:51px;top:963px;" width="9" height="6" viewBox="0 0 9 6"><path d="M0 0l4 4 4-4" fill="none" stroke="#98a0b8" stroke-width="1.1" transform="translate(0.5,0.8)"/></svg>
<div class="r" style="left:0px;top:987px;width:66px;height:41px;background:#eef0f5;border-radius:0px;"></div>
<div class="r" style="left:70px;top:212px;width:4px;height:393px;background:#e6e6e6;border-radius:2px;"></div>
<div class="r" style="left:83px;top:172px;width:280px;height:398px;background:#fff;border:1px solid #d8d8d8;box-sizing:border-box;border-radius:0px;"></div>
<div class="r" style="left:84px;top:173px;width:278px;height:28px;background:#efeff2;border-radius:0px;"></div>
<div class="r" style="left:107px;top:173px;width:68px;height:28px;background:#fff;border-radius:0px;"></div>
<svg class="r" style="left:90px;top:176px;" width="9" height="23" viewBox="0 0 9 23"><path d="M2 5.5V4a2.5 2.5 0 0 1 5 0v1.5" fill="none" stroke="#8a8a8a" stroke-width="1.5"/><rect x="0.5" y="5.5" width="8" height="6" rx="1" fill="#8a8a8a"/><rect x="3.5" y="7.5" width="2" height="2" fill="#eee"/><rect x="1" y="14" width="2" height="2" fill="#888"/><rect x="5.5" y="14" width="2" height="2" fill="#888"/><rect x="1" y="17.5" width="2" height="2" fill="#888"/><rect x="5.5" y="17.5" width="2" height="2" fill="#888"/><rect x="1" y="21" width="2" height="2" fill="#888"/><rect x="5.5" y="21" width="2" height="2" fill="#888"/></svg>
<div class="t" style="left:117px;top:179.0px;font-size:12px;line-height:16px;color:#2a78e4;font-weight:normal;">构件列表</div>
<div class="t" style="left:185px;top:179.0px;font-size:12px;line-height:16px;color:#2e2e2e;font-weight:normal;">图纸管理</div>
<svg class="r" style="left:343px;top:182px;" width="10" height="10" viewBox="0 0 10 10"><path d="M1 1l8 8M9 1L1 9" stroke="#8a8a8a" stroke-width="1.2"/></svg>
<div class="r" style="left:94px;top:208px;width:32px;height:26px;background:#f3f3f5;border-radius:3px;"></div>
<div class="r" style="left:127px;top:208px;width:12px;height:26px;background:#f3f3f5;border-radius:3px;"></div>
<div class="r" style="left:148px;top:208px;width:32px;height:26px;background:#f3f3f5;border-radius:3px;"></div>
<div class="r" style="left:189px;top:208px;width:32px;height:26px;background:#f3f3f5;border-radius:3px;"></div>
<div class="r" style="left:230px;top:208px;width:32px;height:26px;background:#f3f3f5;border-radius:3px;"></div>
<div class="r" style="left:271px;top:208px;width:32px;height:26px;background:#f3f3f5;border-radius:3px;"></div>
<div class="r" style="left:326px;top:208px;width:26px;height:26px;background:#f5f5f7;border:1px solid #dadada;box-sizing:border-box;border-radius:3px;"></div>
<svg class="r" style="left:101px;top:212px;" width="17" height="17" viewBox="0 0 17 17"><path d="M2 5v10.5h13V6l-3.5-3.5H7" fill="none" stroke="#4b5263" stroke-width="1.4"/><path d="M1.5 0.5l4 4M5.5 0.5l-4 4M3.5 0v5M0.5 2.5h6" stroke="#2a78e4" stroke-width="0.9"/></svg>
<svg class="r" style="left:129.5px;top:219.75px" width="5.0" height="3.5" viewBox="0 0 5.0 3.5"><path d="M0 0H5.0L2.5 2.5Z" fill="#888"/></svg>
<svg class="r" style="left:156px;top:212px;" width="16" height="16" viewBox="0 0 16 16"><rect x="6" y="1" width="9" height="9" rx="1.5" fill="#cfe0f7" stroke="#2a78e4" stroke-width="1.4"/><path d="M6 5.5H2.5a1 1 0 0 0-1 1V14a1 1 0 0 0 1 1H10a1 1 0 0 0 1-1V10" fill="none" stroke="#4b5263" stroke-width="1.4"/></svg>
<svg class="r" style="left:198px;top:212px;" width="14" height="16" viewBox="0 0 14 16"><path d="M1 3.5h12M5 3.5V1.5h4v2" fill="none" stroke="#4b5263" stroke-width="1.3"/><path d="M2.5 3.5v11h9v-11" fill="none" stroke="#4b5263" stroke-width="1.4"/><path d="M5.5 6.5v5M8.5 6.5v5" stroke="#e02020" stroke-width="1.4"/></svg>
<svg class="r" style="left:237px;top:212px;" width="16" height="16" viewBox="0 0 16 16"><rect x="6" y="1" width="9" height="9" rx="1.5" fill="#e6effb" stroke="#2a78e4" stroke-width="1.4"/><path d="M6 4H4v7.5h7.5V10M3 6H1.5v9H10v-1.5" fill="none" stroke="#4b5263" stroke-width="1.3"/></svg>
<svg class="r" style="left:278px;top:212px;" width="16" height="16" viewBox="0 0 16 16"><path d="M1.5 1.5h13v7M1.5 1.5v13H8" fill="none" stroke="#4b5263" stroke-width="1.4"/><path d="M4 2v4h7V2" fill="none" stroke="#4b5263" stroke-width="1.2"/><rect x="9" y="9.5" width="6" height="5.5" fill="#cfe0f7" stroke="#2a78e4" stroke-width="1"/></svg>
<svg class="r" style="left:335px;top:218px;" width="8" height="6" viewBox="0 0 8 6"><path d="M0 0l3 3-3 3zM4 0l3 3-3 3z" fill="#444"/></svg>
<div class="r" style="left:92px;top:241px;width:260px;height:25px;background:#f1f1f3;border-radius:12.5px;"></div>
<div class="t" style="left:104px;top:246.0px;font-size:12px;line-height:16px;color:#999;font-weight:normal;">搜索构件...</div>
<svg class="r" style="left:330px;top:248px;" width="12" height="12" viewBox="0 0 12 12"><circle cx="5" cy="5" r="4" fill="none" stroke="#aaa" stroke-width="1.2"/><path d="M8 8l3 3" stroke="#aaa" stroke-width="1.2"/></svg>
<svg class="r" style="left:89.5px;top:287.5px" width="6" height="4" viewBox="0 0 6 4"><path d="M0 0H6L3 3Z" fill="#777"/></svg>
<div class="t" style="left:99px;top:280.5px;font-size:12px;line-height:16px;color:#2e2e2e;font-weight:normal;">过梁</div>
<div class="t" style="left:108px;top:304.5px;font-size:12px;line-height:16px;color:#2e2e2e;font-weight:normal;word-spacing:1px;letter-spacing:0.45px">窗台压顶 &lt;17&gt;</div>
<div class="t" style="left:108px;top:328.5px;font-size:12px;line-height:16px;color:#2e2e2e;font-weight:normal;word-spacing:1px;letter-spacing:0.45px">GL-1 &lt;61&gt;</div>
<div class="t" style="left:108px;top:352.5px;font-size:12px;line-height:16px;color:#2e2e2e;font-weight:normal;word-spacing:1px;letter-spacing:0.45px">GL-2 &lt;14&gt;</div>
<div class="t" style="left:108px;top:376.5px;font-size:12px;line-height:16px;color:#2e2e2e;font-weight:normal;word-spacing:1px;letter-spacing:0.45px">GL-6 &lt;6&gt;</div>
<svg class="r" style="left:89.5px;top:407.5px" width="6" height="4" viewBox="0 0 6 4"><path d="M0 0H6L3 3Z" fill="#777"/></svg>
<div class="t" style="left:99px;top:400.5px;font-size:12px;line-height:16px;color:#2e2e2e;font-weight:normal;">梁下挂板</div>
<div class="r" style="left:105px;top:422px;width:91px;height:21px;background:#c5dcf3;border-radius:2px;"></div>
<div class="t" style="left:108px;top:424.5px;font-size:12px;line-height:16px;color:#2e2e2e;font-weight:normal;word-spacing:1px;letter-spacing:0.45px">LXGB-1 &lt;56&gt;</div>
<div class="r" style="left:83px;top:574px;width:280px;height:419px;background:#fff;border:1px solid #d8d8d8;box-sizing:border-box;border-radius:0px;"></div>
<div class="r" style="left:84px;top:575px;width:278px;height:29px;background:#efeff2;border-radius:0px;"></div>
<div class="r" style="left:107px;top:575px;width:68px;height:29px;background:#fff;border-radius:0px;"></div>
<svg class="r" style="left:90px;top:579px;" width="9" height="23" viewBox="0 0 9 23"><path d="M2 5.5V4a2.5 2.5 0 0 1 5 0v1.5" fill="none" stroke="#8a8a8a" stroke-width="1.5"/><rect x="0.5" y="5.5" width="8" height="6" rx="1" fill="#8a8a8a"/><rect x="3.5" y="7.5" width="2" height="2" fill="#eee"/><rect x="1" y="14" width="2" height="2" fill="#888"/><rect x="5.5" y="14" width="2" height="2" fill="#888"/><rect x="1" y="17.5" width="2" height="2" fill="#888"/><rect x="5.5" y="17.5" width="2" height="2" fill="#888"/><rect x="1" y="21" width="2" height="2" fill="#888"/><rect x="5.5" y="21" width="2" height="2" fill="#888"/></svg>
<div class="t" style="left:117px;top:581.5px;font-size:12px;line-height:16px;color:#2a78e4;font-weight:normal;">属性列表</div>
<div class="t" style="left:185px;top:581.5px;font-size:12px;line-height:16px;color:#2e2e2e;font-weight:normal;">图层管理</div>
<svg class="r" style="left:343px;top:584px;" width="10" height="10" viewBox="0 0 10 10"><path d="M1 1l8 8M9 1L1 9" stroke="#8a8a8a" stroke-width="1.2"/></svg>
<div class="r" style="left:84px;top:605px;width:266px;height:24px;background:#efefef;border-radius:0px;"></div>
<div class="r" style="left:84px;top:628px;width:266px;height:1px;background:#d8d8d8;border-radius:0px;"></div>
<div class="r" style="left:184px;top:605px;width:1px;height:24px;background:#d8d8d8;border-radius:0px;"></div>
<div class="r" style="left:308px;top:605px;width:1px;height:24px;background:#d8d8d8;border-radius:0px;"></div>
<div class="r" style="left:349px;top:605px;width:1px;height:24px;background:#d8d8d8;border-radius:0px;"></div>
<div class="t" style="left:34.0px;top:609.0px;width:200px;text-align:center;font-size:12px;line-height:16px;color:#2e2e2e;font-weight:normal">属性名称</div>
<div class="t" style="left:147.0px;top:609.0px;width:200px;text-align:center;font-size:12px;line-height:16px;color:#2e2e2e;font-weight:normal">属性值</div>
<div class="t" style="left:229.0px;top:609.0px;width:200px;text-align:center;font-size:12px;line-height:16px;color:#2e2e2e;font-weight:normal">附加</div>
<div class="r" style="left:84px;top:629px;width:266px;height:24px;background:#ececec;border-radius:0px;"></div>
<svg class="r" style="left:93.5px;top:639.75px" width="5.0" height="3.5" viewBox="0 0 5.0 3.5"><path d="M0 0H5.0L2.5 2.5Z" fill="#888"/></svg>
<div class="t" style="left:105px;top:633.0px;font-size:12px;line-height:16px;color:#2e2e2e;font-weight:normal;">基础属性</div>
<svg class="r" style="left:173px;top:632px;" width="6" height="6" viewBox="0 0 6 6"><circle cx="3" cy="3" r="2.8" fill="#ee1111"/></svg>
<div class="t" style="left:99px;top:658.0px;font-size:12px;line-height:16px;color:#2143e8;font-weight:normal;">名称</div>
<div class="r" style="left:185px;top:656px;width:123px;height:21px;background:#fff;border:1px solid #d6d6d6;box-sizing:border-box;border-radius:0px;"></div>
<div class="t" style="left:188px;top:658.0px;font-size:12px;line-height:16px;color:#2e2e2e;font-weight:normal;">LXGB-1</div>
<div class="t" style="left:99px;top:683.0px;font-size:12px;line-height:16px;color:#2143e8;font-weight:normal;">图元类型</div>
<div class="r" style="left:185px;top:681px;width:123px;height:21px;background:#fff;border:1px solid #d6d6d6;box-sizing:border-box;border-radius:0px;"></div>
<div class="t" style="left:188px;top:683.0px;font-size:12px;line-height:16px;color:#2e2e2e;font-weight:normal;">普通图元</div>
<div class="r" style="left:322px;top:684px;width:14px;height:14px;background:#fff;border:1px solid #777;box-sizing:border-box;border-radius:2px;"></div>
<div class="t" style="left:99px;top:708.0px;font-size:12px;line-height:16px;color:#2143e8;font-weight:normal;">结构类别</div>
<div class="r" style="left:185px;top:706px;width:123px;height:21px;background:#fff;border:1px solid #d6d6d6;box-sizing:border-box;border-radius:0px;"></div>
<div class="t" style="left:188px;top:708.0px;font-size:12px;line-height:16px;color:#aaa;font-weight:normal;">梁下挂板</div>
<div class="r" style="left:322px;top:709px;width:14px;height:14px;background:#fff;border:1px solid #777;box-sizing:border-box;border-radius:2px;"></div>
<div class="t" style="left:99px;top:733.0px;font-size:12px;line-height:16px;color:#2143e8;font-weight:normal;">截面宽度(mm)</div>
<div class="r" style="left:185px;top:731px;width:123px;height:21px;background:#fff;border:1px solid #d6d6d6;box-sizing:border-box;border-radius:0px;"></div>
<div class="r" style="left:322px;top:734px;width:14px;height:14px;background:#fff;border:1px solid #777;box-sizing:border-box;border-radius:2px;"></div>
<div class="t" style="left:99px;top:758.0px;font-size:12px;line-height:16px;color:#2e2e2e;font-weight:normal;">截面高度(mm)</div>
<div class="r" style="left:185px;top:756px;width:123px;height:21px;background:#fff;border:1px solid #d6d6d6;box-sizing:border-box;border-radius:0px;"></div>
<div class="r" style="left:322px;top:759px;width:14px;height:14px;background:#fff;border:1px solid #777;box-sizing:border-box;border-radius:2px;"></div>
<div class="t" style="left:99px;top:783.0px;font-size:12px;line-height:16px;color:#2e2e2e;font-weight:normal;">中心线距左...</div>
<div class="r" style="left:185px;top:781px;width:123px;height:21px;background:#fff;border:1px solid #d6d6d6;box-sizing:border-box;border-radius:0px;"></div>
<div class="t" style="left:188px;top:783.0px;font-size:12px;line-height:16px;color:#2e2e2e;font-weight:normal;">(0)</div>
<div class="r" style="left:322px;top:784px;width:14px;height:14px;background:#fff;border:1px solid #777;box-sizing:border-box;border-radius:2px;"></div>
<div class="t" style="left:99px;top:808.0px;font-size:12px;line-height:16px;color:#2143e8;font-weight:normal;">全部纵筋</div>
<div class="r" style="left:185px;top:806px;width:123px;height:21px;background:#fff;border:1px solid #d6d6d6;box-sizing:border-box;border-radius:0px;"></div>
<div class="r" style="left:322px;top:809px;width:14px;height:14px;background:#fff;border:1px solid #777;box-sizing:border-box;border-radius:2px;"></div>
<div class="t" style="left:99px;top:833.0px;font-size:12px;line-height:16px;color:#2143e8;font-weight:normal;">上部纵筋</div>
<div class="r" style="left:185px;top:831px;width:123px;height:21px;background:#fff;border:1px solid #d6d6d6;box-sizing:border-box;border-radius:0px;"></div>
<div class="t" style="left:188px;top:833.0px;font-size:12px;line-height:16px;color:#2e2e2e;font-weight:normal;">2</div>
<svg class="r" style="left:197px;top:833.5px;" width="9" height="10" viewBox="0 0 9 10"><rect x="0.6" y="2.6" width="7.8" height="3.8" fill="none" stroke="#333" stroke-width="1.1"/><path d="M4.5 0v9" stroke="#333" stroke-width="1.1"/><path d="M0.6 4.5h7.8M0 8.6h9" stroke="#333" stroke-width="1.1"/></svg>
<div class="t" style="left:207.5px;top:833.0px;font-size:12px;line-height:16px;color:#2e2e2e;font-weight:normal;">12</div>
<div class="r" style="left:322px;top:834px;width:14px;height:14px;background:#fff;border:1px solid #777;box-sizing:border-box;border-radius:2px;"></div>
<div class="t" style="left:99px;top:858.0px;font-size:12px;line-height:16px;color:#2143e8;font-weight:normal;">下部纵筋</div>
<div class="r" style="left:185px;top:856px;width:123px;height:21px;background:#fff;border:1px solid #d6d6d6;box-sizing:border-box;border-radius:0px;"></div>
<div class="t" style="left:188px;top:858.0px;font-size:12px;line-height:16px;color:#2e2e2e;font-weight:normal;">2</div>
<svg class="r" style="left:197px;top:858.5px;" width="9" height="10" viewBox="0 0 9 10"><rect x="0.6" y="2.6" width="7.8" height="3.8" fill="none" stroke="#333" stroke-width="1.1"/><path d="M4.5 0v9" stroke="#333" stroke-width="1.1"/><path d="M0.6 4.5h7.8M0 8.6h9" stroke="#333" stroke-width="1.1"/></svg>
<div class="t" style="left:207.5px;top:858.0px;font-size:12px;line-height:16px;color:#2e2e2e;font-weight:normal;">14</div>
<div class="r" style="left:322px;top:859px;width:14px;height:14px;background:#fff;border:1px solid #777;box-sizing:border-box;border-radius:2px;"></div>
<div class="t" style="left:99px;top:883.0px;font-size:12px;line-height:16px;color:#2143e8;font-weight:normal;">箍筋</div>
<div class="r" style="left:185px;top:881px;width:123px;height:21px;background:#fff;border:1px solid #d6d6d6;box-sizing:border-box;border-radius:0px;"></div>
<svg class="r" style="left:190px;top:884px;" width="9" height="10" viewBox="0 0 9 10"><rect x="0.6" y="2.6" width="7.8" height="3.8" fill="none" stroke="#333" stroke-width="1.1"/><path d="M4.5 0v9.5" stroke="#333" stroke-width="1.1"/></svg>
<div class="t" style="left:200.5px;top:883.0px;font-size:12px;line-height:16px;color:#2e2e2e;font-weight:normal;">6@150(2)</div>
<div class="r" style="left:322px;top:884px;width:14px;height:14px;background:#fff;border:1px solid #777;box-sizing:border-box;border-radius:2px;"></div>
<div class="t" style="left:99px;top:908.0px;font-size:12px;line-height:16px;color:#2143e8;font-weight:normal;">肢数</div>
<div class="r" style="left:185px;top:906px;width:123px;height:21px;background:#fff;border:1px solid #d6d6d6;box-sizing:border-box;border-radius:0px;"></div>
<div class="t" style="left:188px;top:908.0px;font-size:12px;line-height:16px;color:#2e2e2e;font-weight:normal;">2</div>
<div class="r" style="left:322px;top:909px;width:14px;height:14px;background:#fff;border:1px solid #777;box-sizing:border-box;border-radius:2px;"></div>
<div class="t" style="left:99px;top:933.0px;font-size:12px;line-height:16px;color:#2143e8;font-weight:normal;">梁箍筋是否...</div>
<div class="r" style="left:185px;top:931px;width:123px;height:21px;background:#fff;border:1px solid #d6d6d6;box-sizing:border-box;border-radius:0px;"></div>
<div class="t" style="left:188px;top:933.0px;font-size:12px;line-height:16px;color:#2e2e2e;font-weight:normal;">否</div>
<div class="r" style="left:322px;top:934px;width:14px;height:14px;background:#fff;border:1px solid #777;box-sizing:border-box;border-radius:2px;"></div>
<div class="t" style="left:99px;top:958.0px;font-size:12px;line-height:16px;color:#2143e8;font-weight:normal;">梁下挂板土...</div>
<div class="r" style="left:185px;top:956px;width:123px;height:21px;background:#fff;border:1px solid #d6d6d6;box-sizing:border-box;border-radius:0px;"></div>
<div class="t" style="left:188px;top:958.0px;font-size:12px;line-height:16px;color:#2e2e2e;font-weight:normal;">是</div>
<div class="r" style="left:322px;top:959px;width:14px;height:14px;background:#fff;border:1px solid #777;box-sizing:border-box;border-radius:2px;"></div>
<div class="t" style="left:99px;top:983.0px;font-size:12px;line-height:16px;color:#2143e8;font-weight:normal;">材质</div>
<div class="r" style="left:185px;top:981px;width:123px;height:21px;background:#fff;border:1px solid #d6d6d6;box-sizing:border-box;border-radius:0px;"></div>
<div class="t" style="left:188px;top:983.0px;font-size:12px;line-height:16px;color:#2e2e2e;font-weight:normal;">现浇混凝土</div>
<div class="r" style="left:322px;top:984px;width:14px;height:14px;background:#fff;border:1px solid #777;box-sizing:border-box;border-radius:2px;"></div>
<svg class="r" style="left:297px;top:683px;" width="6" height="6" viewBox="0 0 6 6"><circle cx="3" cy="3" r="2.8" fill="#ee1111"/></svg>
<div class="r" style="left:354px;top:617px;width:4px;height:157px;background:#e6e6e6;border-radius:2px;"></div>
<div class="r" style="left:83px;top:992px;width:280px;height:1px;background:#d8d8d8;border-radius:0px;"></div>
<svg class="r" style="left:367px;top:172px" width="1209" height="820" viewBox="367 172 1209 820"><rect x="367" y="172" width="1209" height="820" fill="#000"/><line x1="376" y1="516" x2="400" y2="525.7" stroke="#0d820d" stroke-width="1.3" /><line x1="1141" y1="825.5" x2="1493" y2="968" stroke="#0d820d" stroke-width="1.3" /><line x1="379" y1="327" x2="1563" y2="809" stroke="#0d820d" stroke-width="1.3" /><line x1="379" y1="692" x2="561" y2="594" stroke="#0d820d" stroke-width="1.3" /><line x1="855" y1="980" x2="1141" y2="827" stroke="#0d820d" stroke-width="1.3" /><line x1="383" y1="608" x2="1043" y2="877.6" stroke="#0d820d" stroke-width="1.3" /><line x1="385" y1="701" x2="945" y2="931" stroke="#0d820d" stroke-width="1.3" /><line x1="1255" y1="870.4" x2="1576" y2="695.5" stroke="#0d820d" stroke-width="1.3" /><line x1="1368.7" y1="916.4" x2="1563" y2="809" stroke="#0d820d" stroke-width="1.3" /><line x1="449" y1="645" x2="488" y2="641" stroke="#0d820d" stroke-width="1.3" /><line x1="1023" y1="879.6" x2="1062" y2="875.6" stroke="#0d820d" stroke-width="1.3" /><line x1="925" y1="933" x2="964" y2="929" stroke="#0d820d" stroke-width="1.3" /><line x1="1253.5" y1="861.4" x2="1256.5" y2="879.4" stroke="#0d820d" stroke-width="1.3" /><line x1="1367.2" y1="907.4" x2="1370.2" y2="925.4" stroke="#0d820d" stroke-width="1.3" /><line x1="1448.5" y1="754" x2="1451.5" y2="772" stroke="#0d820d" stroke-width="1.3" /><polygon points="386.2,518.8 380.8,524.2 373.2,524.2 367.8,518.8 367.8,511.2 373.2,505.8 380.8,505.8 386.2,511.2" fill="none" stroke="#0a8a0a" stroke-width="1.2"/><text x="377" y="521" text-anchor="middle" font-size="15" fill="#fff" font-family="Liberation Sans">7</text><polygon points="367,172 1576,172 1576,190 1168,412 1112,478 367,177.5" fill="#434343" stroke="#434343" stroke-width="0.5" stroke-linejoin="round"/><polygon points="925,172 888,172 1300.6,325.6 1317.3,316.2" fill="#2f6a31" stroke="#2f6a31" stroke-width="0.5" stroke-linejoin="round"/><polygon points="1140,172 1100,172 1411,293 1424,285" fill="#306b31" stroke="#306b31" stroke-width="0.5" stroke-linejoin="round"/><line x1="1122" y1="175" x2="1418" y2="288" stroke="#3a7a3a" stroke-width="2" /><polygon points="1043,211 1060,219 1150,172 1118,172" fill="#338a33" opacity="0.7"/><polygon points="1405,282 1432,292 1450,286 1422,276" fill="#2f8a2f" opacity="0.6"/><polygon points="977,199 995,187.5 1013,193 994,205" fill="#5a00c0" stroke="#5a00c0" stroke-width="0.5" stroke-linejoin="round"/><polygon points="1081,243 1103,231 1117.5,238 1096,249.5" fill="#5a00c0" stroke="#5a00c0" stroke-width="0.5" stroke-linejoin="round"/><polygon points="437,172 601,172 601,260 545,216" fill="#10561a" stroke="#10561a" stroke-width="0.5" stroke-linejoin="round"/><polygon points="508,172 545,172 545,208 508,194" fill="#44557a" stroke="#44557a" stroke-width="0.5" stroke-linejoin="round"/><polygon points="508,172 519,172 519,198.5 508,194" fill="#4a5580" stroke="#4a5580" stroke-width="0.5" stroke-linejoin="round"/><polygon points="601,164.9 1166,393.0 1166,402.0 601,173.9" fill="#2f6b31" stroke="#2f6b31" stroke-width="0.5" stroke-linejoin="round"/><polygon points="601,173.9 1166,402.0 1166,411.9 601,181.8" fill="#36793a" stroke="#36793a" stroke-width="0.5" stroke-linejoin="round"/><polygon points="601,181.8 976,334.5 976,386.8 601,233.1" fill="#78b828" stroke="#78b828" stroke-width="0.5" stroke-linejoin="round"/><polygon points="976,334.5 1166,411.9 1166,464.7 976,386.8" fill="#10561a" stroke="#10561a" stroke-width="0.5" stroke-linejoin="round"/><polygon points="763,247.8 813.5,268.3 813.5,320.2 763,299.5" fill="#44557a" stroke="#44557a" stroke-width="0.5" stroke-linejoin="round"/><polygon points="763,247.8 774,252.3 774,304.0 763,299.5" fill="#4a5580" stroke="#4a5580" stroke-width="0.5" stroke-linejoin="round"/><polygon points="976,334.5 1014,350.0 1014,402.4 976,386.8" fill="#44557a" stroke="#44557a" stroke-width="0.5" stroke-linejoin="round"/><polygon points="976,334.5 987,339.0 987,391.3 976,386.8" fill="#4a5580" stroke="#4a5580" stroke-width="0.5" stroke-linejoin="round"/><polygon points="1080,376.9 1118,392.3 1118,445.0 1080,429.4" fill="#44557a" stroke="#44557a" stroke-width="0.5" stroke-linejoin="round"/><polygon points="1080,376.9 1091,381.3 1091,434.0 1080,429.4" fill="#4a5580" stroke="#4a5580" stroke-width="0.5" stroke-linejoin="round"/><polygon points="420,158.8 1166,464.7 1166,470.7 420,164.8" fill="#2f7a32" stroke="#2f7a32" stroke-width="0.5" stroke-linejoin="round"/><polygon points="598,180.6 616,172 646,172 626,181 620.2,185.2 605,179" fill="#44a422" stroke="#44a422" stroke-width="0.5" stroke-linejoin="round"/><polygon points="620,172 646,172 632,178 626,178" fill="#70a828" stroke="#70a828" stroke-width="0.5" stroke-linejoin="round"/><polygon points="578.6,191.8 605,179 620.2,185.2 601,194" fill="#70a828" stroke="#70a828" stroke-width="0.5" stroke-linejoin="round"/><polygon points="601,186 620.2,185.2 620.2,240.8 601,250" fill="#78b428" stroke="#78b428" stroke-width="0.5" stroke-linejoin="round"/><polygon points="620.2,185.2 626,181 626,191.8 671,211 620.2,240" fill="#4aae22" stroke="#4aae22" stroke-width="0.5" stroke-linejoin="round"/><polygon points="601,250 620,240.8 620,247 601,256.5" fill="#d8c828" stroke="#d8c828" stroke-width="0.5" stroke-linejoin="round"/><polygon points="367,177.5 1112,478.0 1112,482.0 367,181.0" fill="#2e6e30" stroke="#2e6e30" stroke-width="0.5" stroke-linejoin="round"/><polygon points="367,181.0 1112,482.0 1112,495.0 367,193.0" fill="#6b896b" stroke="#6b896b" stroke-width="0.5" stroke-linejoin="round"/><polygon points="367,193.0 1112,495.0 1112,589.0 367,286.0" fill="#7f9f7f" stroke="#7f9f7f" stroke-width="0.5" stroke-linejoin="round"/><line x1="367" y1="187.2" x2="1112" y2="488.5" stroke="#5a845a" stroke-width="1.1" stroke-dasharray="1.5 4.5"/><polygon points="1140,427.2 1576,190.0 1576,197.0 1140,433.2" fill="#2e6e30" stroke="#2e6e30" stroke-width="0.5" stroke-linejoin="round"/><polygon points="1162,421.2 1576,197.0 1576,211.0 1162,435.2" fill="#6b896b" stroke="#6b896b" stroke-width="0.5" stroke-linejoin="round"/><polygon points="1162,435.2 1576,211.0 1576,268.0 1162,490.2" fill="#7a9a7a" stroke="#7a9a7a" stroke-width="0.5" stroke-linejoin="round"/><polygon points="1162,490.2 1576,268.0 1576,286.0 1162,509.8" fill="#2b28c8" stroke="#2b28c8" stroke-width="0.5" stroke-linejoin="round"/><line x1="1168" y1="425" x2="1576" y2="204" stroke="#5a845a" stroke-width="1.1" stroke-dasharray="1.5 4.5"/><polygon points="1163,509 1576,286 1576,593 1163,818" fill="#c888c8" stroke="#c888c8" stroke-width="0.5" stroke-linejoin="round"/><polygon points="367,286 433,312.8422 433,330.8422 367,304" fill="#dc0a0a" stroke="#dc0a0a" stroke-width="0.5" stroke-linejoin="round"/><polygon points="367,304 518,365.4117 518,558 367,496" fill="#0c0a68" stroke="#0c0a68" stroke-width="0.5" stroke-linejoin="round"/><line x1="367" y1="325.5" x2="507" y2="382" stroke="#c8306c" stroke-width="1.2" /><polygon points="367,304 518,365.4117 518,368.4117 367,307" fill="#1414e0" stroke="#1414e0" stroke-width="0.5" stroke-linejoin="round"/><polygon points="432,330.4355 447,336.536 447,545 432,539" fill="#1818d8" stroke="#1818d8" stroke-width="0.5" stroke-linejoin="round"/><polygon points="401,319 433,332 433,345 416,353 401,347" fill="#4010d8" stroke="#4010d8" stroke-width="0.5" stroke-linejoin="round"/><polygon points="507,360 518,365 518,394 507,389" fill="#4010d8" stroke="#4010d8" stroke-width="0.5" stroke-linejoin="round"/><polygon points="367,496 518,558 518,567.3 367,505.5" fill="#1616d4" stroke="#1616d4" stroke-width="0.5" stroke-linejoin="round"/><polygon points="367,505.5 522,569 522,578 367,516" fill="#d890d8" stroke="#d890d8" stroke-width="0.5" stroke-linejoin="round"/><polygon points="367,512 522,575 522,578 367,516" fill="#c078c0" stroke="#c078c0" stroke-width="0.5" stroke-linejoin="round"/><polygon points="518,347.4117 606,383.2013 606,607 575,598 518,576.5" fill="#d890d8" stroke="#d890d8" stroke-width="0.5" stroke-linejoin="round"/><polygon points="602,381.5745 606,383.2013 606,607 602,606" fill="#c888c8" stroke="#c888c8" stroke-width="0.5" stroke-linejoin="round"/><polygon points="545,204 575,216 575,598 545,587.4" fill="#6a00d8" stroke="#6a00d8" stroke-width="0.5" stroke-linejoin="round"/><polygon points="575,216 601,202 601,263.3 575,277.6" fill="#5e00c8" stroke="#5e00c8" stroke-width="0.5" stroke-linejoin="round"/><polygon points="545,204 571,190.7 601,202 575,216" fill="#5a00c0" stroke="#5a00c0" stroke-width="0.5" stroke-linejoin="round"/><polygon points="606,401.2013 751,460.1728 751,663.4 606,604" fill="#0c0a68" stroke="#0c0a68" stroke-width="0.5" stroke-linejoin="round"/><polygon points="615,407.8616 751,463.1728 751,496 615,564" fill="#707080" stroke="#707080" stroke-width="0.5" stroke-linejoin="round"/><polygon points="606,401.2013 615,404.8616 615,600 606,604" fill="#1818d8" stroke="#1818d8" stroke-width="0.5" stroke-linejoin="round"/><polygon points="675,429.2636 690,435.3641 690,627.5 675,621" fill="#1818d8" stroke="#1818d8" stroke-width="0.5" stroke-linejoin="round"/><polygon points="606,401.2013 751,460.1728 751,463.1728 606,404.2013" fill="#1212d8" stroke="#1212d8" stroke-width="0.5" stroke-linejoin="round"/><polygon points="615,597.2 750,651.5 755.5,653 755.5,664 606,604" fill="#1616d4" stroke="#1616d4" stroke-width="0.5" stroke-linejoin="round"/><polygon points="600,604 755.5,664 755.5,669 751,671 600,609.6" fill="#d890d8" stroke="#d890d8" stroke-width="0.5" stroke-linejoin="round"/><polygon points="600,604 755.5,664 755.5,667 600,607" fill="#c080c0" stroke="#c080c0" stroke-width="0.5" stroke-linejoin="round"/><polygon points="749,459.3594 755.5,462.00295 755.5,664 749,661" fill="#1818d8" stroke="#1818d8" stroke-width="0.5" stroke-linejoin="round"/><polygon points="755.5,462.00295 902,521.5844999999999 902,729 755.5,669" fill="#42186a" stroke="#42186a" stroke-width="0.5" stroke-linejoin="round"/><line x1="781" y1="490" x2="902" y2="538.8" stroke="#c8306c" stroke-width="1.2" /><polygon points="755.5,462.00295 765,465.8666 765,672 755.5,669" fill="#7e28d8" stroke="#7e28d8" stroke-width="0.5" stroke-linejoin="round"/><polygon points="826,490.6753 840,496.3691 840,694 826,688" fill="#7e28d8" stroke="#7e28d8" stroke-width="0.5" stroke-linejoin="round"/><polygon points="755.5,462.00295 902,521.5844999999999 902,524.5844999999999 755.5,465.00295" fill="#7e28d8" stroke="#7e28d8" stroke-width="0.5" stroke-linejoin="round"/><polygon points="765,662.4 902,718.5 902,729 755.5,669" fill="#7e28d8" stroke="#7e28d8" stroke-width="0.5" stroke-linejoin="round"/><polygon points="765,462 800,476 800,484 785,492 765,485" fill="#5a18e0" stroke="#5a18e0" stroke-width="0.5" stroke-linejoin="round"/><polygon points="902,521.5844999999999 906.8,523.53666 906.8,727 902,729" fill="#c888c8" stroke="#c888c8" stroke-width="0.5" stroke-linejoin="round"/><polygon points="906,523.2112999999999 1052,582.5895 1052,783 906,727" fill="#0c0a68" stroke="#0c0a68" stroke-width="0.5" stroke-linejoin="round"/><line x1="916" y1="546" x2="1052" y2="599" stroke="#c8306c" stroke-width="1.2" /><polygon points="906,523.2112999999999 916,527.2783 916,723 906,727" fill="#1818d8" stroke="#1818d8" stroke-width="0.5" stroke-linejoin="round"/><polygon points="976,551.6803 991,557.7808 991,759 976,753" fill="#1818d8" stroke="#1818d8" stroke-width="0.5" stroke-linejoin="round"/><polygon points="906,523.2112999999999 1052,582.5895 1052,585.5895 906,526.2112999999999" fill="#1212d8" stroke="#1212d8" stroke-width="0.5" stroke-linejoin="round"/><polygon points="916,721 1052,776 1052,783 906,727" fill="#1616d4" stroke="#1616d4" stroke-width="0.5" stroke-linejoin="round"/><polygon points="902,727 1052,783 1052,790 902,735" fill="#d890d8" stroke="#d890d8" stroke-width="0.5" stroke-linejoin="round"/><polygon points="902,731 1052,787 1052,790 902,735" fill="#c078c0" stroke="#c078c0" stroke-width="0.5" stroke-linejoin="round"/><polygon points="991,556 1015,566 1015,574 1004,582 991,577" fill="#4010d8" stroke="#4010d8" stroke-width="0.5" stroke-linejoin="round"/><polygon points="1052,564.5895 1112,588.9915000000001 1112,817.6 1052,790" fill="#d890d8" stroke="#d890d8" stroke-width="0.5" stroke-linejoin="round"/><polygon points="433,312.8 537,355.1 537,373.1 433,330.8" fill="#00a0a0" stroke="#00a0a0" stroke-width="0.5" stroke-linejoin="round"/><polygon points="583,373.8 1070,571.9 1070,589.9 583,391.8" fill="#00a0a0" stroke="#00a0a0" stroke-width="0.5" stroke-linejoin="round"/><polygon points="1111.5,435.5 1142.5,447 1142,830.4 1112,817.6" fill="#6e00dc" stroke="#6e00dc" stroke-width="0.5" stroke-linejoin="round"/><polygon points="1142.5,447 1164.5,431.6 1166,816 1142,830.4" fill="#6400cc" stroke="#6400cc" stroke-width="0.5" stroke-linejoin="round"/><polygon points="1111.5,435.5 1138.3,421.3 1164.5,431.6 1142.5,447" fill="#5a00c0" stroke="#5a00c0" stroke-width="0.5" stroke-linejoin="round"/><polygon points="1338,339.3 1377,319.6 1377,701.5 1338,723" fill="#6600cc" stroke="#6600cc" stroke-width="0.5" stroke-linejoin="round"/><polygon points="1300.6,325.6 1339.3,304 1377,319.3 1338.2,339.2" fill="#5a00c0" stroke="#5a00c0" stroke-width="0.5" stroke-linejoin="round"/><polygon points="389.2,331.2 383.2,337.2 374.8,337.2 368.8,331.2 368.8,322.8 374.8,316.8 383.2,316.8 389.2,322.8" fill="none" stroke="#0a8a0a" stroke-width="1.2"/><text x="379" y="333" text-anchor="middle" font-size="16" fill="#fff" font-family="Liberation Sans">B</text><circle cx="379" cy="692" r="11" fill="#000"/><polygon points="389.2,696.2 383.2,702.2 374.8,702.2 368.8,696.2 368.8,687.8 374.8,681.8 383.2,681.8 389.2,687.8" fill="none" stroke="#0a8a0a" stroke-width="1.2"/><text x="379" y="698" text-anchor="middle" font-size="16" fill="#fff" font-family="Liberation Sans">8</text><circle cx="855" cy="980" r="11" fill="#000"/><polygon points="865.2,984.2 859.2,990.2 850.8,990.2 844.8,984.2 844.8,975.8 850.8,969.8 859.2,969.8 865.2,975.8" fill="none" stroke="#0a8a0a" stroke-width="1.2"/><text x="855" y="986" text-anchor="middle" font-size="16" fill="#fff" font-family="Liberation Sans">9</text><circle cx="1493" cy="968" r="11" fill="#000"/><polygon points="1503.2,972.2 1497.2,978.2 1488.8,978.2 1482.8,972.2 1482.8,963.8 1488.8,957.8 1497.2,957.8 1503.2,963.8" fill="none" stroke="#0a8a0a" stroke-width="1.2"/><text x="1493" y="974" text-anchor="middle" font-size="16" fill="#fff" font-family="Liberation Sans">A</text><circle cx="1563" cy="809" r="11" fill="#000"/><polygon points="1573.2,813.2 1567.2,819.2 1558.8,819.2 1552.8,813.2 1552.8,804.8 1558.8,798.8 1567.2,798.8 1573.2,804.8" fill="none" stroke="#0a8a0a" stroke-width="1.2"/><text x="1563" y="815" text-anchor="middle" font-size="16" fill="#fff" font-family="Liberation Sans">B</text><g transform="translate(708 787) rotate(23)"><text x="0" y="6" text-anchor="middle" font-size="18" fill="#fff" font-family="Liberation Sans">7600</text></g><g transform="translate(1409 840) rotate(-31) skewX(-5)"><text x="0" y="6" text-anchor="middle" font-size="18" fill="#fff" font-family="Liberation Sans">3000</text></g><circle cx="971" cy="582" r="394" fill="none" stroke="#b4b4b4" stroke-width="1"/><circle cx="971" cy="188" r="30" fill="none" stroke="#b4b4b4" stroke-width="1"/><circle cx="971" cy="977" r="30" fill="none" stroke="#b4b4b4" stroke-width="1"/><circle cx="577" cy="582" r="30" fill="none" stroke="#b4b4b4" stroke-width="1"/><circle cx="1365" cy="582" r="30" fill="none" stroke="#b4b4b4" stroke-width="1"/><rect x="525.7" y="301" width="640.3" height="440" fill="none" stroke="#16aef6" stroke-width="3.6"/><line x1="514" y1="644" x2="732" y2="485" stroke="#f25555" stroke-width="3.3"/><polygon points="751,470.5 721,480 736,494" fill="#f25555"/><rect x="412" y="939" width="10" height="9" fill="#b8b8b8"/><path d="M417 940v-12" stroke="#0a10ff" stroke-width="4"/><path d="M412 929l5-12 5 12z" fill="#0a10ff"/><path d="M420 941l8-5" stroke="#00f000" stroke-width="4"/><path d="M423 938l8-9 6 3-5 9z" fill="#00f000"/><path d="M419 944l10 4" stroke="#f00000" stroke-width="4"/><path d="M427 951l10-7 5 7-10 2z" fill="#f00000"/><path d="M414 906h7l-7 11h7" fill="none" stroke="#0a10ff" stroke-width="1.3"/><path d="M436 925l4.5 5.5 4.5-5.5M440.5 930.5v6" fill="none" stroke="#00f000" stroke-width="1.2"/><path d="M440 948l8 12M448 948l-8 12" fill="none" stroke="#f00000" stroke-width="1.2"/><path d="M367 553h9a6 6 0 0 1 6 6v47a6 6 0 0 1-6 6h-9z" fill="#555"/><path d="M377 578l-4 4 4 4" fill="none" stroke="#999" stroke-width="1"/><path d="M1576 552h-10a6 6 0 0 0-6 6v48a6 6 0 0 0 6 6h10z" fill="#555"/><path d="M1566 578l4 4-4 4" fill="none" stroke="#999" stroke-width="1"/></svg>
<div class="r" style="left:1543px;top:172px;width:33px;height:247px;background:#fff;border:1px solid #d6d6d6;box-sizing:border-box;border-radius:4px;"></div>
<svg class="r" style="left:1549px;top:186px;" width="20" height="20" viewBox="0 0 20 20"><circle cx="10" cy="10" r="7.3" fill="none" stroke="#4b5263" stroke-width="1.3"/><ellipse cx="10" cy="10" rx="9.3" ry="4" transform="rotate(-30 10 10)" fill="none" stroke="#2a78e4" stroke-width="1.4"/></svg>
<svg class="r" style="left:1549px;top:214px;" width="20" height="20" viewBox="0 0 20 20"><rect x="1.5" y="1.5" width="17" height="17" rx="1.5" fill="none" stroke="#4b5263" stroke-width="1.3"/><text x="3" y="16" font-size="8" font-weight="bold" fill="#2a78e4" font-family="Liberation Sans">2D</text></svg>
<svg class="r" style="left:1549px;top:243px;" width="20" height="20" viewBox="0 0 20 20"><path d="M1.5 6.5h12v12h-12z" fill="none" stroke="#4b5263" stroke-width="1.3"/><path d="M1.5 6.5l5-5h12v12l-5 5M13.5 6.5l5-5" fill="none" stroke="#4b5263" stroke-width="1.3"/></svg>
<svg class="r" style="left:1555.5px;top:271.25px" width="7.0" height="4.5" viewBox="0 0 7.0 4.5"><path d="M0 0H7.0L3.5 3.5Z" fill="#444"/></svg>
<svg class="r" style="left:1549px;top:282px;" width="20" height="20" viewBox="0 0 20 20"><path d="M1.5 6.5h12v12h-12z" fill="#cfe0f7" stroke="#2a78e4" stroke-width="1.3"/><path d="M1.5 6.5l5-5h12v12l-5 5v-12l5-5" fill="#cfe0f7" stroke="#2a78e4" stroke-width="1.3"/></svg>
<svg class="r" style="left:1555.5px;top:309.75px" width="7.0" height="4.5" viewBox="0 0 7.0 4.5"><path d="M0 0H7.0L3.5 3.5Z" fill="#444"/></svg>
<svg class="r" style="left:1549px;top:321px;" width="20" height="20" viewBox="0 0 20 20"><path d="M1.5 7V1.5H7M13 1.5h5.5V7M18.5 13v5.5H13M7 18.5H1.5V13" fill="none" stroke="#4b5263" stroke-width="1.4"/></svg>
<svg class="r" style="left:1549px;top:350px;" width="20" height="20" viewBox="0 0 20 20"><rect x="1.5" y="1.5" width="17" height="17" rx="2" fill="none" stroke="#4b5263" stroke-width="1.2" stroke-dasharray="3 1.5"/><path d="M10 5l4.5 2.5v5L10 15l-4.5-2.5v-5z M5.5 7.5L10 10l4.5-2.5M10 10v5" fill="none" stroke="#2a78e4" stroke-width="1.2"/></svg>
<div class="r" style="left:1550px;top:377px;width:19px;height:1px;background:#555;border-radius:0px;"></div>
<svg class="r" style="left:1549px;top:384px;" width="20" height="20" viewBox="0 0 20 20"><path d="M12 18.5H1.5v-17h17v8" fill="none" stroke="#4b5263" stroke-width="1.3"/><path d="M4.5 6h3M9.5 6h5M4.5 9.5h3M9.5 9.5h3M4.5 13h3" stroke="#4b5263" stroke-width="1.2"/><ellipse cx="15.5" cy="15.5" rx="4.3" ry="2.8" fill="#fff" stroke="#2a78e4" stroke-width="1.2"/><circle cx="15.5" cy="15.5" r="1.3" fill="#2a78e4"/></svg>
<div class="r" style="left:1580px;top:172px;width:238px;height:821px;background:#fff;border:1px solid #c8c8c8;box-sizing:border-box;border-radius:0px;"></div>
<div class="r" style="left:1581px;top:173px;width:237px;height:28px;background:#efeff2;border-radius:0px;"></div>
<svg class="r" style="left:1587px;top:176px;" width="9" height="23" viewBox="0 0 9 23"><path d="M2 5.5V4a2.5 2.5 0 0 1 5 0v1.5" fill="none" stroke="#8a8a8a" stroke-width="1.5"/><rect x="0.5" y="5.5" width="8" height="6" rx="1" fill="#8a8a8a"/><rect x="3.5" y="7.5" width="2" height="2" fill="#eee"/><rect x="1" y="14" width="2" height="2" fill="#888"/><rect x="5.5" y="14" width="2" height="2" fill="#888"/><rect x="1" y="17.5" width="2" height="2" fill="#888"/><rect x="5.5" y="17.5" width="2" height="2" fill="#888"/><rect x="1" y="21" width="2" height="2" fill="#888"/><rect x="5.5" y="21" width="2" height="2" fill="#888"/></svg>
<div class="t" style="left:1606px;top:179.0px;font-size:12px;line-height:16px;color:#2e2e2e;font-weight:normal;">显示设置</div>
<div class="r" style="left:1581px;top:227px;width:237px;height:1px;background:#cfcfcf;border-radius:0px;"></div>
<div class="r" style="left:1584px;top:204px;width:61px;height:24px;background:#fff;border:1px solid #cfcfcf;box-sizing:border-box;border-radius:4px;border-bottom:none;border-bottom-left-radius:0;border-bottom-right-radius:0"></div>
<div class="t" style="left:1590px;top:208.5px;font-size:12px;line-height:16px;color:#2a78e4;font-weight:normal;">图元显示</div>
<div class="r" style="left:1648px;top:206px;width:60px;height:21px;background:#dedede;border-radius:3px;"></div>
<div class="t" style="left:1654px;top:208.5px;font-size:12px;line-height:16px;color:#444;font-weight:normal;">楼层显示</div>
<svg class="r" style="left:1590px;top:232px;" width="14" height="14" viewBox="0 0 14 14"><rect x="0" y="0" width="14" height="14" rx="2.5" fill="#2a78e4"/><path d="M3 7.2l3 3 5-5.6" fill="none" stroke="#fff" stroke-width="1.8"/></svg>
<div class="t" style="left:1607px;top:231.0px;font-size:12px;line-height:16px;color:#2e2e2e;font-weight:normal;">普通图元</div>
<svg class="r" style="left:1682px;top:232px;" width="14" height="14" viewBox="0 0 14 14"><rect x="0" y="0" width="14" height="14" rx="2.5" fill="#2a78e4"/><path d="M3 7.2l3 3 5-5.6" fill="none" stroke="#fff" stroke-width="1.8"/></svg>
<div class="t" style="left:1699px;top:231.0px;font-size:12px;line-height:16px;color:#2e2e2e;font-weight:normal;">拆除图元</div>
<svg class="r" style="left:1775px;top:232px;" width="14" height="14" viewBox="0 0 14 14"><rect x="0" y="0" width="14" height="14" rx="2.5" fill="#2a78e4"/><path d="M3 7.2l3 3 5-5.6" fill="none" stroke="#fff" stroke-width="1.8"/></svg>
<div class="t" style="left:1792px;top:231.0px;font-size:12px;line-height:16px;color:#2e2e2e;font-weight:normal;">加固图元</div>
<div class="r" style="left:1583px;top:255px;width:235px;height:698px;background:#fff;border:1px solid #d0d0d0;box-sizing:border-box;border-radius:0px;"></div>
<div class="r" style="left:1583px;top:255px;width:2px;height:698px;background:#d6d6d6;border-radius:0px;"></div>
<div class="r" style="left:1726px;top:255px;width:64px;height:21px;background:#7db7ef;border-radius:0px;"></div>
<div class="t" style="left:1555.0px;top:257.5px;width:200px;text-align:center;font-size:12px;line-height:16px;color:#2e2e2e;font-weight:normal">图层构件</div>
<div class="t" style="left:1658.0px;top:257.5px;width:200px;text-align:center;font-size:12px;line-height:16px;color:#fff;font-weight:normal">显示图元</div>
<div class="t" style="left:1797px;top:257.5px;font-size:12px;line-height:16px;color:#2e2e2e;font-weight:normal;">显示名称</div>
<div class="r" style="left:1583px;top:275px;width:235px;height:1px;background:#d8d8d8;border-radius:0px;"></div>
<div class="r" style="left:1726px;top:255px;width:1px;height:698px;background:#d8d8d8;border-radius:0px;"></div>
<div class="r" style="left:1789px;top:255px;width:1px;height:698px;background:#d8d8d8;border-radius:0px;"></div>
<div class="r" style="left:1585px;top:297px;width:233px;height:1px;background:#e0e0e0;border-radius:0px;"></div>
<svg class="r" style="left:1586px;top:280.0px;" width="13" height="13" viewBox="0 0 13 13"><rect x="0.5" y="0.5" width="12" height="12" rx="2" fill="#fff" stroke="#666" stroke-width="1"/><path d="M3.5 6.5h6" stroke="#444" stroke-width="1"/></svg>
<div class="t" style="left:1605px;top:278.5px;font-size:12px;line-height:16px;color:#2e2e2e;font-weight:normal;">所有构件</div>
<svg class="r" style="left:1751px;top:279.5px;" width="14" height="14" viewBox="0 0 14 14"><rect x="0.5" y="0.5" width="13" height="13" rx="2" fill="#fff" stroke="#777"/><rect x="3" y="3" width="8" height="8" fill="#9cc6f5" stroke="#3a7ee0" stroke-width="0.8"/></svg>
<svg class="r" style="left:1814px;top:279.5px;" width="4" height="14" viewBox="0 0 4 14"><rect x="0.5" y="0.5" width="13" height="13" rx="2" fill="#fff" stroke="#777"/></svg>
<div class="r" style="left:1585px;top:318px;width:233px;height:1px;background:#e0e0e0;border-radius:0px;"></div>
<div class="r" style="left:1592px;top:297px;width:1px;height:21px;background:#e3e3e3;border-radius:0px;"></div>
<svg class="r" style="left:1596px;top:301.0px;" width="13" height="13" viewBox="0 0 13 13"><rect x="0.5" y="0.5" width="12" height="12" rx="2" fill="#fff" stroke="#666" stroke-width="1"/><path d="M3.5 6.5h6 M6.5 3.5v6" stroke="#444" stroke-width="1"/></svg>
<div class="t" style="left:1615px;top:299.5px;font-size:12px;line-height:16px;color:#2e2e2e;font-weight:normal;">施工段</div>
<svg class="r" style="left:1751px;top:300.5px;" width="14" height="14" viewBox="0 0 14 14"><rect x="0.5" y="0.5" width="13" height="13" rx="2" fill="#fff" stroke="#777"/><rect x="3" y="3" width="8" height="8" fill="#9cc6f5" stroke="#3a7ee0" stroke-width="0.8"/></svg>
<svg class="r" style="left:1814px;top:300.5px;" width="4" height="14" viewBox="0 0 4 14"><rect x="0.5" y="0.5" width="13" height="13" rx="2" fill="#fff" stroke="#777"/></svg>
<div class="r" style="left:1585px;top:339px;width:233px;height:1px;background:#e0e0e0;border-radius:0px;"></div>
<div class="r" style="left:1592px;top:318px;width:1px;height:21px;background:#e3e3e3;border-radius:0px;"></div>
<svg class="r" style="left:1596px;top:322.0px;" width="13" height="13" viewBox="0 0 13 13"><rect x="0.5" y="0.5" width="12" height="12" rx="2" fill="#fff" stroke="#666" stroke-width="1"/><path d="M3.5 6.5h6 M6.5 3.5v6" stroke="#444" stroke-width="1"/></svg>
<div class="t" style="left:1615px;top:320.5px;font-size:12px;line-height:16px;color:#2e2e2e;font-weight:normal;">轴线</div>
<svg class="r" style="left:1751px;top:321.5px;" width="14" height="14" viewBox="0 0 14 14"><rect x="0" y="0" width="14" height="14" rx="2.5" fill="#2a78e4"/><path d="M3 7.2l3 3 5-5.6" fill="none" stroke="#fff" stroke-width="1.8"/></svg>
<svg class="r" style="left:1814px;top:321.5px;" width="4" height="14" viewBox="0 0 4 14"><rect x="0.5" y="0.5" width="13" height="13" rx="2" fill="#fff" stroke="#777"/></svg>
<div class="r" style="left:1585px;top:360px;width:233px;height:1px;background:#e0e0e0;border-radius:0px;"></div>
<div class="r" style="left:1592px;top:339px;width:1px;height:21px;background:#e3e3e3;border-radius:0px;"></div>
<svg class="r" style="left:1596px;top:343.0px;" width="13" height="13" viewBox="0 0 13 13"><rect x="0.5" y="0.5" width="12" height="12" rx="2" fill="#fff" stroke="#666" stroke-width="1"/><path d="M3.5 6.5h6 M6.5 3.5v6" stroke="#444" stroke-width="1"/></svg>
<div class="t" style="left:1615px;top:341.5px;font-size:12px;line-height:16px;color:#2e2e2e;font-weight:normal;">柱</div>
<svg class="r" style="left:1751px;top:342.5px;" width="14" height="14" viewBox="0 0 14 14"><rect x="0" y="0" width="14" height="14" rx="2.5" fill="#2a78e4"/><path d="M3 7.2l3 3 5-5.6" fill="none" stroke="#fff" stroke-width="1.8"/></svg>
<svg class="r" style="left:1814px;top:342.5px;" width="4" height="14" viewBox="0 0 4 14"><rect x="0.5" y="0.5" width="13" height="13" rx="2" fill="#fff" stroke="#777"/></svg>
<div class="r" style="left:1585px;top:381px;width:233px;height:1px;background:#e0e0e0;border-radius:0px;"></div>
<div class="r" style="left:1592px;top:360px;width:1px;height:21px;background:#e3e3e3;border-radius:0px;"></div>
<svg class="r" style="left:1596px;top:364.0px;" width="13" height="13" viewBox="0 0 13 13"><rect x="0.5" y="0.5" width="12" height="12" rx="2" fill="#fff" stroke="#666" stroke-width="1"/><path d="M3.5 6.5h6 M6.5 3.5v6" stroke="#444" stroke-width="1"/></svg>
<div class="t" style="left:1615px;top:362.5px;font-size:12px;line-height:16px;color:#2e2e2e;font-weight:normal;">墙</div>
<svg class="r" style="left:1751px;top:363.5px;" width="14" height="14" viewBox="0 0 14 14"><rect x="0.5" y="0.5" width="13" height="13" rx="2" fill="#fff" stroke="#777"/><rect x="3" y="3" width="8" height="8" fill="#9cc6f5" stroke="#3a7ee0" stroke-width="0.8"/></svg>
<svg class="r" style="left:1814px;top:363.5px;" width="4" height="14" viewBox="0 0 4 14"><rect x="0.5" y="0.5" width="13" height="13" rx="2" fill="#fff" stroke="#777"/></svg>
<div class="r" style="left:1585px;top:402px;width:233px;height:1px;background:#e0e0e0;border-radius:0px;"></div>
<div class="r" style="left:1592px;top:381px;width:1px;height:21px;background:#e3e3e3;border-radius:0px;"></div>
<svg class="r" style="left:1596px;top:385.0px;" width="13" height="13" viewBox="0 0 13 13"><rect x="0.5" y="0.5" width="12" height="12" rx="2" fill="#fff" stroke="#666" stroke-width="1"/><path d="M3.5 6.5h6 M6.5 3.5v6" stroke="#444" stroke-width="1"/></svg>
<div class="t" style="left:1615px;top:383.5px;font-size:12px;line-height:16px;color:#2e2e2e;font-weight:normal;">门窗洞</div>
<svg class="r" style="left:1751px;top:384.5px;" width="14" height="14" viewBox="0 0 14 14"><rect x="0.5" y="0.5" width="13" height="13" rx="2" fill="#fff" stroke="#777"/><rect x="3" y="3" width="8" height="8" fill="#9cc6f5" stroke="#3a7ee0" stroke-width="0.8"/></svg>
<svg class="r" style="left:1814px;top:384.5px;" width="4" height="14" viewBox="0 0 4 14"><rect x="0.5" y="0.5" width="13" height="13" rx="2" fill="#fff" stroke="#777"/></svg>
<div class="r" style="left:1585px;top:423px;width:233px;height:1px;background:#e0e0e0;border-radius:0px;"></div>
<div class="r" style="left:1592px;top:402px;width:1px;height:21px;background:#e3e3e3;border-radius:0px;"></div>
<svg class="r" style="left:1596px;top:406.0px;" width="13" height="13" viewBox="0 0 13 13"><rect x="0.5" y="0.5" width="12" height="12" rx="2" fill="#fff" stroke="#666" stroke-width="1"/><path d="M3.5 6.5h6" stroke="#444" stroke-width="1"/></svg>
<div class="t" style="left:1615px;top:404.5px;font-size:12px;line-height:16px;color:#2e2e2e;font-weight:normal;">梁</div>
<svg class="r" style="left:1751px;top:405.5px;" width="14" height="14" viewBox="0 0 14 14"><rect x="0" y="0" width="14" height="14" rx="2.5" fill="#2a78e4"/><path d="M3 7.2l3 3 5-5.6" fill="none" stroke="#fff" stroke-width="1.8"/></svg>
<svg class="r" style="left:1814px;top:405.5px;" width="4" height="14" viewBox="0 0 4 14"><rect x="0.5" y="0.5" width="13" height="13" rx="2" fill="#fff" stroke="#777"/></svg>
<div class="r" style="left:1585px;top:444px;width:233px;height:1px;background:#e0e0e0;border-radius:0px;"></div>
<div class="r" style="left:1592px;top:423px;width:1px;height:21px;background:#e3e3e3;border-radius:0px;"></div>
<div class="r" style="left:1602px;top:423px;width:1px;height:21px;background:#e3e3e3;border-radius:0px;"></div>
<div class="r" style="left:1603px;top:433.5px;width:17px;height:1px;background:#e3e3e3;border-radius:0px;"></div>
<div class="t" style="left:1625px;top:425.5px;font-size:12px;line-height:16px;color:#2e2e2e;font-weight:normal;">梁</div>
<svg class="r" style="left:1751px;top:426.5px;" width="14" height="14" viewBox="0 0 14 14"><rect x="0" y="0" width="14" height="14" rx="2.5" fill="#2a78e4"/><path d="M3 7.2l3 3 5-5.6" fill="none" stroke="#fff" stroke-width="1.8"/></svg>
<svg class="r" style="left:1814px;top:426.5px;" width="4" height="14" viewBox="0 0 4 14"><rect x="0.5" y="0.5" width="13" height="13" rx="2" fill="#fff" stroke="#777"/></svg>
<div class="r" style="left:1585px;top:465px;width:233px;height:1px;background:#e0e0e0;border-radius:0px;"></div>
<div class="r" style="left:1592px;top:444px;width:1px;height:21px;background:#e3e3e3;border-radius:0px;"></div>
<div class="r" style="left:1602px;top:444px;width:1px;height:21px;background:#e3e3e3;border-radius:0px;"></div>
<div class="r" style="left:1603px;top:454.5px;width:17px;height:1px;background:#e3e3e3;border-radius:0px;"></div>
<div class="t" style="left:1625px;top:446.5px;font-size:12px;line-height:16px;color:#2e2e2e;font-weight:normal;">连梁</div>
<svg class="r" style="left:1751px;top:447.5px;" width="14" height="14" viewBox="0 0 14 14"><rect x="0" y="0" width="14" height="14" rx="2.5" fill="#2a78e4"/><path d="M3 7.2l3 3 5-5.6" fill="none" stroke="#fff" stroke-width="1.8"/></svg>
<svg class="r" style="left:1814px;top:447.5px;" width="4" height="14" viewBox="0 0 4 14"><rect x="0.5" y="0.5" width="13" height="13" rx="2" fill="#fff" stroke="#777"/></svg>
<div class="r" style="left:1585px;top:486px;width:233px;height:1px;background:#e0e0e0;border-radius:0px;"></div>
<div class="r" style="left:1592px;top:465px;width:1px;height:21px;background:#e3e3e3;border-radius:0px;"></div>
<div class="r" style="left:1602px;top:465px;width:1px;height:11px;background:#e3e3e3;border-radius:0px;"></div>
<div class="r" style="left:1603px;top:475.5px;width:17px;height:1px;background:#e3e3e3;border-radius:0px;"></div>
<div class="t" style="left:1625px;top:467.5px;font-size:12px;line-height:16px;color:#2e2e2e;font-weight:normal;">圈梁</div>
<svg class="r" style="left:1751px;top:468.5px;" width="14" height="14" viewBox="0 0 14 14"><rect x="0" y="0" width="14" height="14" rx="2.5" fill="#2a78e4"/><path d="M3 7.2l3 3 5-5.6" fill="none" stroke="#fff" stroke-width="1.8"/></svg>
<svg class="r" style="left:1814px;top:468.5px;" width="4" height="14" viewBox="0 0 4 14"><rect x="0.5" y="0.5" width="13" height="13" rx="2" fill="#fff" stroke="#777"/></svg>
<div class="r" style="left:1585px;top:507px;width:233px;height:1px;background:#e0e0e0;border-radius:0px;"></div>
<div class="r" style="left:1592px;top:486px;width:1px;height:21px;background:#e3e3e3;border-radius:0px;"></div>
<svg class="r" style="left:1596px;top:490.0px;" width="13" height="13" viewBox="0 0 13 13"><rect x="0.5" y="0.5" width="12" height="12" rx="2" fill="#fff" stroke="#666" stroke-width="1"/><path d="M3.5 6.5h6" stroke="#444" stroke-width="1"/></svg>
<div class="t" style="left:1615px;top:488.5px;font-size:12px;line-height:16px;color:#2e2e2e;font-weight:normal;">板</div>
<svg class="r" style="left:1751px;top:489.5px;" width="14" height="14" viewBox="0 0 14 14"><rect x="0.5" y="0.5" width="13" height="13" rx="2" fill="#fff" stroke="#777"/><rect x="3" y="3" width="8" height="8" fill="#9cc6f5" stroke="#3a7ee0" stroke-width="0.8"/></svg>
<svg class="r" style="left:1814px;top:489.5px;" width="4" height="14" viewBox="0 0 4 14"><rect x="0.5" y="0.5" width="13" height="13" rx="2" fill="#fff" stroke="#777"/></svg>
<div class="r" style="left:1585px;top:528px;width:233px;height:1px;background:#e0e0e0;border-radius:0px;"></div>
<div class="r" style="left:1592px;top:507px;width:1px;height:21px;background:#e3e3e3;border-radius:0px;"></div>
<div class="r" style="left:1602px;top:507px;width:1px;height:21px;background:#e3e3e3;border-radius:0px;"></div>
<div class="r" style="left:1603px;top:517.5px;width:17px;height:1px;background:#e3e3e3;border-radius:0px;"></div>
<div class="t" style="left:1625px;top:509.5px;font-size:12px;line-height:16px;color:#2e2e2e;font-weight:normal;">现浇板</div>
<svg class="r" style="left:1751px;top:510.5px;" width="14" height="14" viewBox="0 0 14 14"><rect x="0" y="0" width="14" height="14" rx="2.5" fill="#2a78e4"/><path d="M3 7.2l3 3 5-5.6" fill="none" stroke="#fff" stroke-width="1.8"/></svg>
<svg class="r" style="left:1814px;top:510.5px;" width="4" height="14" viewBox="0 0 4 14"><rect x="0.5" y="0.5" width="13" height="13" rx="2" fill="#fff" stroke="#777"/></svg>
<div class="r" style="left:1585px;top:549px;width:233px;height:1px;background:#e0e0e0;border-radius:0px;"></div>
<div class="r" style="left:1592px;top:528px;width:1px;height:21px;background:#e3e3e3;border-radius:0px;"></div>
<div class="r" style="left:1602px;top:528px;width:1px;height:21px;background:#e3e3e3;border-radius:0px;"></div>
<div class="r" style="left:1603px;top:538.5px;width:17px;height:1px;background:#e3e3e3;border-radius:0px;"></div>
<div class="t" style="left:1625px;top:530.5px;font-size:12px;line-height:16px;color:#2e2e2e;font-weight:normal;">螺旋板</div>
<svg class="r" style="left:1751px;top:531.5px;" width="14" height="14" viewBox="0 0 14 14"><rect x="0.5" y="0.5" width="13" height="13" rx="2" fill="#fff" stroke="#777"/></svg>
<svg class="r" style="left:1814px;top:531.5px;" width="4" height="14" viewBox="0 0 4 14"><rect x="0.5" y="0.5" width="13" height="13" rx="2" fill="#fff" stroke="#777"/></svg>
<div class="r" style="left:1585px;top:570px;width:233px;height:1px;background:#e0e0e0;border-radius:0px;"></div>
<div class="r" style="left:1592px;top:549px;width:1px;height:21px;background:#e3e3e3;border-radius:0px;"></div>
<div class="r" style="left:1602px;top:549px;width:1px;height:21px;background:#e3e3e3;border-radius:0px;"></div>
<div class="r" style="left:1603px;top:559.5px;width:17px;height:1px;background:#e3e3e3;border-radius:0px;"></div>
<div class="t" style="left:1625px;top:551.5px;font-size:12px;line-height:16px;color:#2e2e2e;font-weight:normal;">坡道</div>
<svg class="r" style="left:1751px;top:552.5px;" width="14" height="14" viewBox="0 0 14 14"><rect x="0.5" y="0.5" width="13" height="13" rx="2" fill="#fff" stroke="#777"/></svg>
<svg class="r" style="left:1814px;top:552.5px;" width="4" height="14" viewBox="0 0 4 14"><rect x="0.5" y="0.5" width="13" height="13" rx="2" fill="#fff" stroke="#777"/></svg>
<div class="r" style="left:1585px;top:591px;width:233px;height:1px;background:#e0e0e0;border-radius:0px;"></div>
<div class="r" style="left:1592px;top:570px;width:1px;height:21px;background:#e3e3e3;border-radius:0px;"></div>
<div class="r" style="left:1602px;top:570px;width:1px;height:21px;background:#e3e3e3;border-radius:0px;"></div>
<div class="r" style="left:1603px;top:580.5px;width:17px;height:1px;background:#e3e3e3;border-radius:0px;"></div>
<div class="t" style="left:1625px;top:572.5px;font-size:12px;line-height:16px;color:#2e2e2e;font-weight:normal;">柱帽</div>
<svg class="r" style="left:1751px;top:573.5px;" width="14" height="14" viewBox="0 0 14 14"><rect x="0.5" y="0.5" width="13" height="13" rx="2" fill="#fff" stroke="#777"/></svg>
<svg class="r" style="left:1814px;top:573.5px;" width="4" height="14" viewBox="0 0 4 14"><rect x="0.5" y="0.5" width="13" height="13" rx="2" fill="#fff" stroke="#777"/></svg>
<div class="r" style="left:1585px;top:612px;width:233px;height:1px;background:#e0e0e0;border-radius:0px;"></div>
<div class="r" style="left:1592px;top:591px;width:1px;height:21px;background:#e3e3e3;border-radius:0px;"></div>
<div class="r" style="left:1602px;top:591px;width:1px;height:21px;background:#e3e3e3;border-radius:0px;"></div>
<div class="r" style="left:1603px;top:601.5px;width:17px;height:1px;background:#e3e3e3;border-radius:0px;"></div>
<div class="t" style="left:1625px;top:593.5px;font-size:12px;line-height:16px;color:#2e2e2e;font-weight:normal;">板洞</div>
<svg class="r" style="left:1751px;top:594.5px;" width="14" height="14" viewBox="0 0 14 14"><rect x="0.5" y="0.5" width="13" height="13" rx="2" fill="#fff" stroke="#777"/></svg>
<svg class="r" style="left:1814px;top:594.5px;" width="4" height="14" viewBox="0 0 4 14"><rect x="0.5" y="0.5" width="13" height="13" rx="2" fill="#fff" stroke="#777"/></svg>
<div class="r" style="left:1585px;top:633px;width:233px;height:1px;background:#e0e0e0;border-radius:0px;"></div>
<div class="r" style="left:1592px;top:612px;width:1px;height:21px;background:#e3e3e3;border-radius:0px;"></div>
<div class="r" style="left:1602px;top:612px;width:1px;height:21px;background:#e3e3e3;border-radius:0px;"></div>
<div class="r" style="left:1603px;top:622.5px;width:17px;height:1px;background:#e3e3e3;border-radius:0px;"></div>
<div class="t" style="left:1625px;top:614.5px;font-size:12px;line-height:16px;color:#2e2e2e;font-weight:normal;">板受力筋</div>
<svg class="r" style="left:1751px;top:615.5px;" width="14" height="14" viewBox="0 0 14 14"><rect x="0.5" y="0.5" width="13" height="13" rx="2" fill="#fff" stroke="#777"/></svg>
<svg class="r" style="left:1814px;top:615.5px;" width="4" height="14" viewBox="0 0 4 14"><rect x="0.5" y="0.5" width="13" height="13" rx="2" fill="#fff" stroke="#777"/></svg>
<div class="r" style="left:1585px;top:654px;width:233px;height:1px;background:#e0e0e0;border-radius:0px;"></div>
<div class="r" style="left:1592px;top:633px;width:1px;height:21px;background:#e3e3e3;border-radius:0px;"></div>
<div class="r" style="left:1602px;top:633px;width:1px;height:21px;background:#e3e3e3;border-radius:0px;"></div>
<div class="r" style="left:1603px;top:643.5px;width:17px;height:1px;background:#e3e3e3;border-radius:0px;"></div>
<div class="t" style="left:1625px;top:635.5px;font-size:12px;line-height:16px;color:#2e2e2e;font-weight:normal;">板负筋</div>
<svg class="r" style="left:1751px;top:636.5px;" width="14" height="14" viewBox="0 0 14 14"><rect x="0.5" y="0.5" width="13" height="13" rx="2" fill="#fff" stroke="#777"/></svg>
<svg class="r" style="left:1814px;top:636.5px;" width="4" height="14" viewBox="0 0 4 14"><rect x="0.5" y="0.5" width="13" height="13" rx="2" fill="#fff" stroke="#777"/></svg>
<div class="r" style="left:1585px;top:675px;width:233px;height:1px;background:#e0e0e0;border-radius:0px;"></div>
<div class="r" style="left:1592px;top:654px;width:1px;height:21px;background:#e3e3e3;border-radius:0px;"></div>
<div class="r" style="left:1602px;top:654px;width:1px;height:21px;background:#e3e3e3;border-radius:0px;"></div>
<div class="r" style="left:1603px;top:664.5px;width:17px;height:1px;background:#e3e3e3;border-radius:0px;"></div>
<div class="t" style="left:1625px;top:656.5px;font-size:12px;line-height:16px;color:#2e2e2e;font-weight:normal;">楼层板带</div>
<svg class="r" style="left:1751px;top:657.5px;" width="14" height="14" viewBox="0 0 14 14"><rect x="0.5" y="0.5" width="13" height="13" rx="2" fill="#fff" stroke="#777"/></svg>
<svg class="r" style="left:1814px;top:657.5px;" width="4" height="14" viewBox="0 0 4 14"><rect x="0.5" y="0.5" width="13" height="13" rx="2" fill="#fff" stroke="#777"/></svg>
<div class="r" style="left:1585px;top:696px;width:233px;height:1px;background:#e0e0e0;border-radius:0px;"></div>
<div class="r" style="left:1592px;top:675px;width:1px;height:21px;background:#e3e3e3;border-radius:0px;"></div>
<div class="r" style="left:1602px;top:675px;width:1px;height:11px;background:#e3e3e3;border-radius:0px;"></div>
<div class="r" style="left:1603px;top:685.5px;width:17px;height:1px;background:#e3e3e3;border-radius:0px;"></div>
<div class="t" style="left:1625px;top:677.5px;font-size:12px;line-height:16px;color:#2e2e2e;font-weight:normal;">板加腋</div>
<svg class="r" style="left:1751px;top:678.5px;" width="14" height="14" viewBox="0 0 14 14"><rect x="0.5" y="0.5" width="13" height="13" rx="2" fill="#fff" stroke="#777"/></svg>
<svg class="r" style="left:1814px;top:678.5px;" width="4" height="14" viewBox="0 0 4 14"><rect x="0.5" y="0.5" width="13" height="13" rx="2" fill="#fff" stroke="#777"/></svg>
<div class="r" style="left:1585px;top:717px;width:233px;height:1px;background:#e0e0e0;border-radius:0px;"></div>
<div class="r" style="left:1592px;top:696px;width:1px;height:21px;background:#e3e3e3;border-radius:0px;"></div>
<svg class="r" style="left:1596px;top:700.0px;" width="13" height="13" viewBox="0 0 13 13"><rect x="0.5" y="0.5" width="12" height="12" rx="2" fill="#fff" stroke="#666" stroke-width="1"/><path d="M3.5 6.5h6 M6.5 3.5v6" stroke="#444" stroke-width="1"/></svg>
<div class="t" style="left:1615px;top:698.5px;font-size:12px;line-height:16px;color:#2e2e2e;font-weight:normal;">装配式</div>
<svg class="r" style="left:1751px;top:699.5px;" width="14" height="14" viewBox="0 0 14 14"><rect x="0.5" y="0.5" width="13" height="13" rx="2" fill="#fff" stroke="#777"/><rect x="3" y="3" width="8" height="8" fill="#9cc6f5" stroke="#3a7ee0" stroke-width="0.8"/></svg>
<svg class="r" style="left:1814px;top:699.5px;" width="4" height="14" viewBox="0 0 4 14"><rect x="0.5" y="0.5" width="13" height="13" rx="2" fill="#fff" stroke="#777"/></svg>
<div class="r" style="left:1585px;top:738px;width:233px;height:1px;background:#e0e0e0;border-radius:0px;"></div>
<div class="r" style="left:1592px;top:717px;width:1px;height:21px;background:#e3e3e3;border-radius:0px;"></div>
<svg class="r" style="left:1596px;top:721.0px;" width="13" height="13" viewBox="0 0 13 13"><rect x="0.5" y="0.5" width="12" height="12" rx="2" fill="#fff" stroke="#666" stroke-width="1"/><path d="M3.5 6.5h6 M6.5 3.5v6" stroke="#444" stroke-width="1"/></svg>
<div class="t" style="left:1615px;top:719.5px;font-size:12px;line-height:16px;color:#2e2e2e;font-weight:normal;">钢结构</div>
<svg class="r" style="left:1751px;top:720.5px;" width="14" height="14" viewBox="0 0 14 14"><rect x="0.5" y="0.5" width="13" height="13" rx="2" fill="#fff" stroke="#777"/><rect x="3" y="3" width="8" height="8" fill="#9cc6f5" stroke="#3a7ee0" stroke-width="0.8"/></svg>
<svg class="r" style="left:1814px;top:720.5px;" width="4" height="14" viewBox="0 0 4 14"><rect x="0.5" y="0.5" width="13" height="13" rx="2" fill="#fff" stroke="#777"/></svg>
<div class="r" style="left:1585px;top:759px;width:233px;height:1px;background:#e0e0e0;border-radius:0px;"></div>
<div class="r" style="left:1592px;top:738px;width:1px;height:21px;background:#e3e3e3;border-radius:0px;"></div>
<svg class="r" style="left:1596px;top:742.0px;" width="13" height="13" viewBox="0 0 13 13"><rect x="0.5" y="0.5" width="12" height="12" rx="2" fill="#fff" stroke="#666" stroke-width="1"/><path d="M3.5 6.5h6 M6.5 3.5v6" stroke="#444" stroke-width="1"/></svg>
<div class="t" style="left:1615px;top:740.5px;font-size:12px;line-height:16px;color:#2e2e2e;font-weight:normal;">空心楼盖</div>
<svg class="r" style="left:1751px;top:741.5px;" width="14" height="14" viewBox="0 0 14 14"><rect x="0.5" y="0.5" width="13" height="13" rx="2" fill="#fff" stroke="#777"/></svg>
<svg class="r" style="left:1814px;top:741.5px;" width="4" height="14" viewBox="0 0 4 14"><rect x="0.5" y="0.5" width="13" height="13" rx="2" fill="#fff" stroke="#777"/></svg>
<div class="r" style="left:1585px;top:780px;width:233px;height:1px;background:#e0e0e0;border-radius:0px;"></div>
<div class="r" style="left:1592px;top:759px;width:1px;height:21px;background:#e3e3e3;border-radius:0px;"></div>
<svg class="r" style="left:1596px;top:763.0px;" width="13" height="13" viewBox="0 0 13 13"><rect x="0.5" y="0.5" width="12" height="12" rx="2" fill="#fff" stroke="#666" stroke-width="1"/><path d="M3.5 6.5h6 M6.5 3.5v6" stroke="#444" stroke-width="1"/></svg>
<div class="t" style="left:1615px;top:761.5px;font-size:12px;line-height:16px;color:#2e2e2e;font-weight:normal;">楼梯</div>
<svg class="r" style="left:1751px;top:762.5px;" width="14" height="14" viewBox="0 0 14 14"><rect x="0.5" y="0.5" width="13" height="13" rx="2" fill="#fff" stroke="#777"/></svg>
<svg class="r" style="left:1814px;top:762.5px;" width="4" height="14" viewBox="0 0 4 14"><rect x="0.5" y="0.5" width="13" height="13" rx="2" fill="#fff" stroke="#777"/></svg>
<div class="r" style="left:1585px;top:801px;width:233px;height:1px;background:#e0e0e0;border-radius:0px;"></div>
<div class="r" style="left:1592px;top:780px;width:1px;height:21px;background:#e3e3e3;border-radius:0px;"></div>
<svg class="r" style="left:1596px;top:784.0px;" width="13" height="13" viewBox="0 0 13 13"><rect x="0.5" y="0.5" width="12" height="12" rx="2" fill="#fff" stroke="#666" stroke-width="1"/><path d="M3.5 6.5h6 M6.5 3.5v6" stroke="#444" stroke-width="1"/></svg>
<div class="t" style="left:1615px;top:782.5px;font-size:12px;line-height:16px;color:#2e2e2e;font-weight:normal;">装修</div>
<svg class="r" style="left:1751px;top:783.5px;" width="14" height="14" viewBox="0 0 14 14"><rect x="0.5" y="0.5" width="13" height="13" rx="2" fill="#fff" stroke="#777"/></svg>
<svg class="r" style="left:1814px;top:783.5px;" width="4" height="14" viewBox="0 0 4 14"><rect x="0.5" y="0.5" width="13" height="13" rx="2" fill="#fff" stroke="#777"/></svg>
<div class="r" style="left:1585px;top:822px;width:233px;height:1px;background:#e0e0e0;border-radius:0px;"></div>
<div class="r" style="left:1592px;top:801px;width:1px;height:21px;background:#e3e3e3;border-radius:0px;"></div>
<svg class="r" style="left:1596px;top:805.0px;" width="13" height="13" viewBox="0 0 13 13"><rect x="0.5" y="0.5" width="12" height="12" rx="2" fill="#fff" stroke="#666" stroke-width="1"/><path d="M3.5 6.5h6 M6.5 3.5v6" stroke="#444" stroke-width="1"/></svg>
<div class="t" style="left:1615px;top:803.5px;font-size:12px;line-height:16px;color:#2e2e2e;font-weight:normal;">基坑支护</div>
<svg class="r" style="left:1751px;top:804.5px;" width="14" height="14" viewBox="0 0 14 14"><rect x="0.5" y="0.5" width="13" height="13" rx="2" fill="#fff" stroke="#777"/></svg>
<svg class="r" style="left:1814px;top:804.5px;" width="4" height="14" viewBox="0 0 4 14"><rect x="0.5" y="0.5" width="13" height="13" rx="2" fill="#fff" stroke="#777"/></svg>
<div class="r" style="left:1585px;top:843px;width:233px;height:1px;background:#e0e0e0;border-radius:0px;"></div>
<div class="r" style="left:1592px;top:822px;width:1px;height:21px;background:#e3e3e3;border-radius:0px;"></div>
<svg class="r" style="left:1596px;top:826.0px;" width="13" height="13" viewBox="0 0 13 13"><rect x="0.5" y="0.5" width="12" height="12" rx="2" fill="#fff" stroke="#666" stroke-width="1"/><path d="M3.5 6.5h6 M6.5 3.5v6" stroke="#444" stroke-width="1"/></svg>
<div class="t" style="left:1615px;top:824.5px;font-size:12px;line-height:16px;color:#2e2e2e;font-weight:normal;">土方</div>
<svg class="r" style="left:1751px;top:825.5px;" width="14" height="14" viewBox="0 0 14 14"><rect x="0.5" y="0.5" width="13" height="13" rx="2" fill="#fff" stroke="#777"/></svg>
<svg class="r" style="left:1814px;top:825.5px;" width="4" height="14" viewBox="0 0 4 14"><rect x="0.5" y="0.5" width="13" height="13" rx="2" fill="#fff" stroke="#777"/></svg>
<div class="r" style="left:1585px;top:864px;width:233px;height:1px;background:#e0e0e0;border-radius:0px;"></div>
<div class="r" style="left:1592px;top:843px;width:1px;height:21px;background:#e3e3e3;border-radius:0px;"></div>
<svg class="r" style="left:1596px;top:847.0px;" width="13" height="13" viewBox="0 0 13 13"><rect x="0.5" y="0.5" width="12" height="12" rx="2" fill="#fff" stroke="#666" stroke-width="1"/><path d="M3.5 6.5h6" stroke="#444" stroke-width="1"/></svg>
<div class="t" style="left:1615px;top:845.5px;font-size:12px;line-height:16px;color:#2e2e2e;font-weight:normal;">基础</div>
<svg class="r" style="left:1751px;top:846.5px;" width="14" height="14" viewBox="0 0 14 14"><rect x="0.5" y="0.5" width="13" height="13" rx="2" fill="#fff" stroke="#777"/></svg>
<svg class="r" style="left:1814px;top:846.5px;" width="4" height="14" viewBox="0 0 4 14"><rect x="0.5" y="0.5" width="13" height="13" rx="2" fill="#fff" stroke="#777"/></svg>
<div class="r" style="left:1585px;top:885px;width:233px;height:1px;background:#e0e0e0;border-radius:0px;"></div>
<div class="r" style="left:1592px;top:864px;width:1px;height:21px;background:#e3e3e3;border-radius:0px;"></div>
<div class="r" style="left:1602px;top:864px;width:1px;height:21px;background:#e3e3e3;border-radius:0px;"></div>
<div class="r" style="left:1603px;top:874.5px;width:17px;height:1px;background:#e3e3e3;border-radius:0px;"></div>
<div class="t" style="left:1625px;top:866.5px;font-size:12px;line-height:16px;color:#2e2e2e;font-weight:normal;">基础梁</div>
<svg class="r" style="left:1751px;top:867.5px;" width="14" height="14" viewBox="0 0 14 14"><rect x="0.5" y="0.5" width="13" height="13" rx="2" fill="#fff" stroke="#777"/></svg>
<svg class="r" style="left:1814px;top:867.5px;" width="4" height="14" viewBox="0 0 4 14"><rect x="0.5" y="0.5" width="13" height="13" rx="2" fill="#fff" stroke="#777"/></svg>
<div class="r" style="left:1585px;top:906px;width:233px;height:1px;background:#e0e0e0;border-radius:0px;"></div>
<div class="r" style="left:1592px;top:885px;width:1px;height:21px;background:#e3e3e3;border-radius:0px;"></div>
<div class="r" style="left:1602px;top:885px;width:1px;height:21px;background:#e3e3e3;border-radius:0px;"></div>
<div class="r" style="left:1603px;top:895.5px;width:17px;height:1px;background:#e3e3e3;border-radius:0px;"></div>
<div class="t" style="left:1625px;top:887.5px;font-size:12px;line-height:16px;color:#2e2e2e;font-weight:normal;">筏板基础</div>
<svg class="r" style="left:1751px;top:888.5px;" width="14" height="14" viewBox="0 0 14 14"><rect x="0.5" y="0.5" width="13" height="13" rx="2" fill="#fff" stroke="#777"/></svg>
<svg class="r" style="left:1814px;top:888.5px;" width="4" height="14" viewBox="0 0 4 14"><rect x="0.5" y="0.5" width="13" height="13" rx="2" fill="#fff" stroke="#777"/></svg>
<div class="r" style="left:1585px;top:927px;width:233px;height:1px;background:#e0e0e0;border-radius:0px;"></div>
<div class="r" style="left:1592px;top:906px;width:1px;height:21px;background:#e3e3e3;border-radius:0px;"></div>
<div class="r" style="left:1602px;top:906px;width:1px;height:21px;background:#e3e3e3;border-radius:0px;"></div>
<div class="r" style="left:1603px;top:916.5px;width:17px;height:1px;background:#e3e3e3;border-radius:0px;"></div>
<div class="t" style="left:1625px;top:908.5px;font-size:12px;line-height:16px;color:#2e2e2e;font-weight:normal;">筏板主筋</div>
<svg class="r" style="left:1751px;top:909.5px;" width="14" height="14" viewBox="0 0 14 14"><rect x="0.5" y="0.5" width="13" height="13" rx="2" fill="#fff" stroke="#777"/></svg>
<svg class="r" style="left:1814px;top:909.5px;" width="4" height="14" viewBox="0 0 4 14"><rect x="0.5" y="0.5" width="13" height="13" rx="2" fill="#fff" stroke="#777"/></svg>
<div class="r" style="left:1585px;top:948px;width:233px;height:1px;background:#e0e0e0;border-radius:0px;"></div>
<div class="r" style="left:1592px;top:927px;width:1px;height:21px;background:#e3e3e3;border-radius:0px;"></div>
<div class="r" style="left:1602px;top:927px;width:1px;height:21px;background:#e3e3e3;border-radius:0px;"></div>
<div class="r" style="left:1603px;top:937.5px;width:17px;height:1px;background:#e3e3e3;border-radius:0px;"></div>
<div class="t" style="left:1625px;top:929.5px;font-size:12px;line-height:16px;color:#2e2e2e;font-weight:normal;">筏板负筋</div>
<svg class="r" style="left:1751px;top:930.5px;" width="14" height="14" viewBox="0 0 14 14"><rect x="0.5" y="0.5" width="13" height="13" rx="2" fill="#fff" stroke="#777"/></svg>
<svg class="r" style="left:1814px;top:930.5px;" width="4" height="14" viewBox="0 0 4 14"><rect x="0.5" y="0.5" width="13" height="13" rx="2" fill="#fff" stroke="#777"/></svg>
<div class="r" style="left:1585px;top:969px;width:233px;height:1px;background:#e0e0e0;border-radius:0px;"></div>
<div class="r" style="left:1592px;top:948px;width:1px;height:21px;background:#e3e3e3;border-radius:0px;"></div>
<div class="r" style="left:1602px;top:948px;width:1px;height:11px;background:#e3e3e3;border-radius:0px;"></div>
<div class="r" style="left:1603px;top:958.5px;width:17px;height:1px;background:#e3e3e3;border-radius:0px;"></div>
<div class="r" style="left:1727px;top:402px;width:62px;height:21px;background:none;border:2px solid #666;box-sizing:border-box;border-radius:0px;"></div>
<div class="r" style="left:1581px;top:953px;width:237px;height:39px;background:#fff;border-radius:0px;"></div>
<div class="r" style="left:1770px;top:959px;width:48px;height:26px;background:#fff;border:1px solid #cfcfcf;box-sizing:border-box;border-radius:4px;"></div>
<div class="t" style="left:1780px;top:964.0px;font-size:12px;line-height:16px;color:#2e2e2e;font-weight:normal;">恢复默认</div>
<div class="r" style="left:0px;top:993px;width:1818px;height:23px;background:#f7f7f7;border-radius:0px;"></div>
<div class="t" style="left:0px;top:1000.0px;font-size:12px;line-height:16px;color:#2e2e2e;font-weight:normal;">.35</div>
<div class="t" style="left:41px;top:1000.0px;font-size:12px;line-height:16px;color:#2e2e2e;font-weight:normal;">标高：</div>
<div class="t" style="left:82px;top:1000.0px;font-size:12px;line-height:16px;color:#2e2e2e;font-weight:normal;">-0.2~4.15</div>
<div class="t" style="left:181px;top:1000.0px;font-size:12px;line-height:16px;color:#2e2e2e;font-weight:normal;">选中图元：0</div>
<div class="t" style="left:291px;top:1000.0px;font-size:12px;line-height:16px;color:#2e2e2e;font-weight:normal;">隐藏图元：0</div>
<div class="r" style="left:402px;top:996px;width:24px;height:24px;background:#fff;border:1px solid #c8c8c8;box-sizing:border-box;border-radius:3px;"></div>
<div class="r" style="left:430px;top:996px;width:35px;height:24px;background:#dbe7f7;border:1px solid #5a9ae8;box-sizing:border-box;border-radius:3px;"></div>
<div class="r" style="left:468px;top:996px;width:25px;height:24px;background:#dbe7f7;border:1px solid #5a9ae8;box-sizing:border-box;border-radius:3px;"></div>
<div class="r" style="left:499px;top:996px;width:25px;height:24px;background:#fff;border:1px solid #c8c8c8;box-sizing:border-box;border-radius:3px;"></div>
<div class="r" style="left:531px;top:996px;width:35px;height:24px;background:#fff;border:1px solid #c8c8c8;box-sizing:border-box;border-radius:3px;"></div>
<div class="r" style="left:570px;top:996px;width:35px;height:24px;background:#fff;border:1px solid #c8c8c8;box-sizing:border-box;border-radius:3px;"></div>
<div class="r" style="left:608px;top:996px;width:25px;height:24px;background:#fff;border:1px solid #c8c8c8;box-sizing:border-box;border-radius:3px;"></div>
<div class="r" style="left:636px;top:996px;width:25px;height:24px;background:#fff;border:1px solid #c8c8c8;box-sizing:border-box;border-radius:3px;"></div>
<svg class="r" style="left:405px;top:1000px;" width="18" height="16" viewBox="0 0 18 16"><path d="M3 2v11h10M3 9h3v4" fill="none" stroke="#555" stroke-width="1.2"/></svg>
<svg class="r" style="left:433px;top:1000px;" width="18" height="16" viewBox="0 0 18 16"><rect x="3.5" y="2.5" width="11" height="12" rx="3" fill="none" stroke="#555" stroke-width="1.4"/><circle cx="3" cy="2.5" r="1.8" fill="#fff" stroke="#2a78e4" stroke-width="1.1"/></svg>
<svg class="r" style="left:455.5px;top:1006.75px" width="5.0" height="3.5" viewBox="0 0 5.0 3.5"><path d="M0 0H5.0L2.5 2.5Z" fill="#555"/></svg>
<svg class="r" style="left:472px;top:1000px;" width="18" height="16" viewBox="0 0 18 16"><path d="M4 2h10L4 14h10z" fill="none" stroke="#555" stroke-width="1.3"/><rect x="7.5" y="6.5" width="3" height="3" fill="#fff" stroke="#2a78e4"/></svg>
<svg class="r" style="left:503px;top:999px;" width="18" height="17" viewBox="0 0 18 17"><path d="M2 2l14 14M16 2L2 16" stroke="#555" stroke-width="1.2"/><circle cx="9" cy="9" r="1.6" fill="#fff" stroke="#2a78e4" stroke-width="1.1"/></svg>
<svg class="r" style="left:534px;top:999px;" width="18" height="17" viewBox="0 0 18 17"><path d="M2 15h14M3 14l10-9" stroke="#777" stroke-width="1.2"/><rect x="6" y="10" width="2.5" height="2.5" fill="#fff" stroke="#777"/></svg>
<svg class="r" style="left:556.5px;top:1006.75px" width="5.0" height="3.5" viewBox="0 0 5.0 3.5"><path d="M0 0H5.0L2.5 2.5Z" fill="#555"/></svg>
<svg class="r" style="left:573px;top:999px;" width="20" height="17" viewBox="0 0 20 17"><path d="M4 2v7M0.5 5.5h7" stroke="#444" stroke-width="1.3"/><rect x="7" y="10" width="9" height="4" fill="#444"/></svg>
<svg class="r" style="left:595.5px;top:1006.75px" width="5.0" height="3.5" viewBox="0 0 5.0 3.5"><path d="M0 0H5.0L2.5 2.5Z" fill="#555"/></svg>
<svg class="r" style="left:611px;top:999px;" width="18" height="17" viewBox="0 0 18 17"><rect x="3" y="3" width="10" height="9" fill="#4b5263" stroke="#4b5263" stroke-width="1.4"/><path d="M1 5v10h10M13 11l4 3-4 3" fill="none" stroke="#4b5263" stroke-width="1.2"/></svg>
<svg class="r" style="left:639px;top:999px;" width="18" height="17" viewBox="0 0 18 17"><path d="M3 15V9l5-4 6-2" fill="none" stroke="#666" stroke-width="1.1"/><circle cx="3" cy="15" r="1.2" fill="#fff" stroke="#666"/><circle cx="14" cy="3" r="1.2" fill="#fff" stroke="#666"/><path d="M12 10l4 3-4 2z" fill="#444"/></svg>
<svg class="r" style="left:676px;top:999px;" width="16" height="16" viewBox="0 0 16 16"><path d="M1.5 14.5l13-13M1.5 14.5V9M1.5 14.5H7M14.5 1.5H9M14.5 1.5V7" fill="none" stroke="#555" stroke-width="1.3"/></svg>
<div class="t" style="left:695px;top:1000.0px;font-size:12px;line-height:16px;color:#2e2e2e;font-weight:normal;">鼠标左键选择门窗洞口或梁图元</div>
</body></html>
